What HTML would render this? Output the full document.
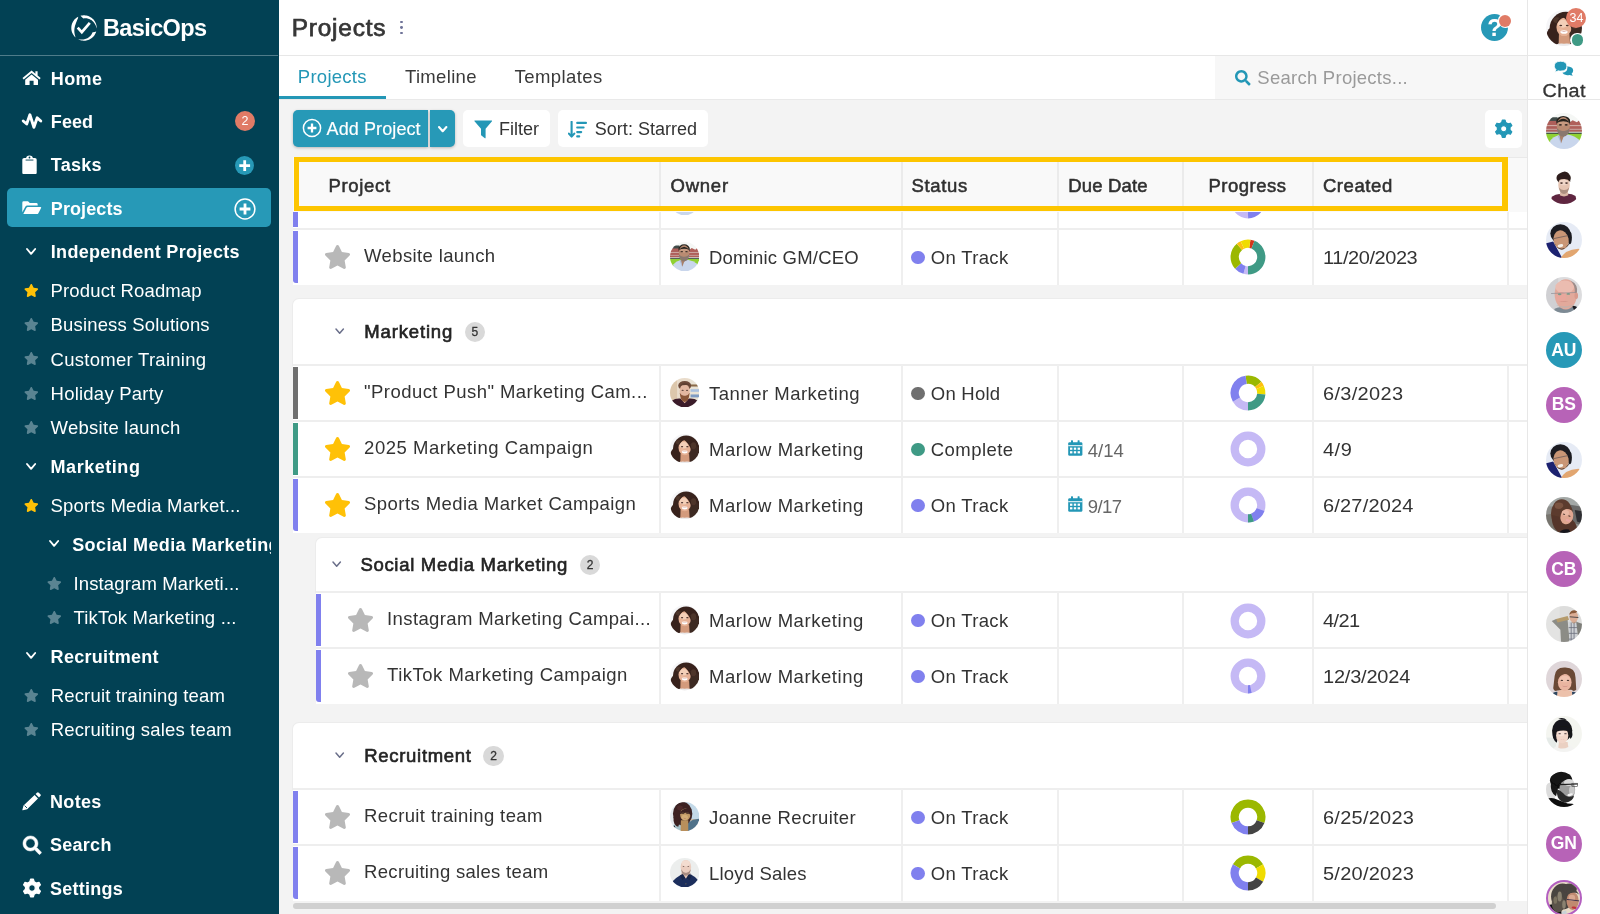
<!DOCTYPE html>
<html><head><meta charset="utf-8"><title>Projects - BasicOps</title>
<style>
html,body{margin:0;padding:0;background:#f3f3f3;}
#app{position:relative;width:1600px;height:914px;overflow:hidden;font-family:"Liberation Sans", sans-serif;}
#app div,#app svg,#app span{position:absolute;}
#app span{white-space:nowrap;line-height:1em;display:block;}
#app{will-change:transform;}
</style></head><body><div id="app">
<div style="left:0px;top:0px;width:1600px;height:914px;background:#f3f3f3;"></div>
<div style="left:279px;top:0px;width:1249px;height:56px;background:#fff;"></div>
<div style="left:279px;top:55px;width:1249px;height:1px;background:#e7e7e7;"></div>
<div style="left:279px;top:56px;width:936px;height:43px;background:#fff;"></div>
<div style="left:1215px;top:56px;width:313px;height:43px;background:#f7f7f7;"></div>
<div style="left:279px;top:99px;width:1249px;height:1px;background:#e9e9e9;"></div>
<div style="left:279px;top:96px;width:107px;height:3px;background:#2397b6;"></div>
<div style="left:1528px;top:0px;width:72px;height:914px;background:#fff;"></div>
<div style="left:1527px;top:0px;width:1px;height:914px;background:#e7e7e7;"></div>
<div style="left:1528px;top:55px;width:72px;height:1px;background:#e7e7e7;"></div>
<div style="left:1528px;top:99px;width:72px;height:1px;background:#e7e7e7;"></div>
<div style="left:0px;top:0px;width:279px;height:914px;background:#024154;"></div>
<div style="left:0px;top:55px;width:278px;height:1px;background:#4f7c8a;"></div>
<svg style="left:69.5px;top:14.0px;" width="28" height="28" viewBox="-14 -14 28 28"><path d="M-5.77 -11.32 L-6.66 -10.81 L-7.51 -10.24 L-8.31 -9.60 L-9.06 -8.90 L-9.75 -8.14 L-10.37 -7.33 L-10.93 -6.47 L-11.41 -5.57 L-11.83 -4.63 L-12.16 -3.66 L-12.42 -2.67 L-12.59 -1.66 L-12.68 -0.64 L-12.69 0.39 L-12.62 1.41 L-12.47 2.42 L-12.23 3.42 L-11.92 4.40 L-11.52 5.34 L-11.05 6.25 L-10.51 7.12 L-9.90 7.95 L-9.23 8.72 L-8.50 9.44 L-8.50 9.44 L-8.76 8.28 L-9.06 7.27 L-9.30 6.30 L-9.48 5.36 L-9.60 4.45 L-9.67 3.57 L-9.69 2.71 L-9.66 1.88 L-9.59 1.07 L-9.48 0.29 L-9.35 -0.47 L-9.19 -1.21 L-9.01 -1.94 L-8.81 -2.65 L-8.59 -3.36 L-8.35 -4.07 L-8.10 -4.79 L-7.82 -5.52 L-7.52 -6.28 L-7.19 -7.06 L-6.83 -7.89 L-6.44 -8.78 L-6.02 -9.78 L-5.77 -11.32Z" fill="#fff"/><path d="M-3.50 -12.21 L-2.53 -12.45 L-1.55 -12.61 L-0.55 -12.69 L0.44 -12.69 L1.44 -12.62 L2.42 -12.47 L3.39 -12.24 L4.34 -11.93 L5.27 -11.56 L6.16 -11.11 L7.01 -10.59 L7.82 -10.01 L8.58 -9.36 L9.29 -8.66 L9.94 -7.91 L10.53 -7.10 L11.05 -6.25 L11.51 -5.37 L11.90 -4.45 L12.21 -3.50 L12.45 -2.53 L12.61 -1.55 L12.69 -0.55 L12.69 0.44 L12.69 0.44 L12.37 -0.54 L12.07 -1.48 L11.72 -2.39 L11.33 -3.25 L10.88 -4.07 L10.39 -4.84 L9.84 -5.57 L9.26 -6.24 L8.63 -6.86 L7.96 -7.42 L7.26 -7.93 L6.54 -8.37 L5.79 -8.75 L5.02 -9.06 L4.25 -9.32 L3.46 -9.51 L2.67 -9.63 L1.89 -9.70 L1.11 -9.70 L0.34 -9.64 L-0.42 -9.52 L-1.21 -9.89 L-2.25 -11.06 L-3.50 -12.21Z" fill="#fff"/><path d="M12.21 3.50 L11.92 4.40 L11.56 5.27 L11.13 6.11 L10.65 6.92 L10.11 7.69 L9.51 8.42 L8.86 9.10 L8.16 9.73 L7.42 10.31 L6.64 10.83 L5.81 11.29 L4.96 11.69 L4.08 12.03 L3.18 12.30 L2.26 12.50 L1.33 12.63 L0.39 12.69 L-0.55 12.69 L-1.49 12.61 L-2.42 12.47 L-3.34 12.25 L-4.24 11.97 L-5.11 11.62 L-5.96 11.21 L-5.96 11.21 L-4.98 11.33 L-4.06 11.46 L-3.15 11.54 L-2.25 11.57 L-1.37 11.54 L-0.50 11.45 L0.35 11.31 L1.17 11.10 L1.96 10.85 L2.73 10.54 L3.46 10.18 L4.15 9.77 L4.80 9.33 L5.42 8.84 L5.98 8.31 L6.50 7.75 L6.98 7.16 L7.40 6.55 L7.77 5.91 L8.09 5.25 L8.36 4.59 L9.07 4.13 L10.59 3.91 L12.21 3.50Z" fill="#fff"/><path d="M-6.3 -0.3 L-2.2 4.2 L5.8 -5.1" fill="none" stroke="#fff" stroke-width="2.7" stroke-linecap="butt" stroke-linejoin="miter"/></svg>
<span id="t0" style="top:16.91px;font-size:23.5px;color:#fff;font-weight:700;letter-spacing:-0.617px;left:103.00px;">BasicOps</span>
<div style="left:7px;top:188px;width:264px;height:39px;background:#2799b7;border-radius:5px;"></div>
<svg style="left:22.4px;top:69.8px;" width="19.2" height="15.4" viewBox="0 0 19.2 15.4"><path d="M9.6 0.6 L0.5 8.1 L1.7 9.5 L9.6 3.0 L17.5 9.5 L18.7 8.1 L15.6 5.55 L15.6 1.2 L13.4 1.2 L13.4 3.75 Z" fill="#fff"/><path d="M9.6 4.5 L3.2 9.8 L3.2 14.6 Q3.2 15.2 3.8 15.2 L7.6 15.2 L7.6 10.8 L11.6 10.8 L11.6 15.2 L15.4 15.2 Q16 15.2 16 14.6 L16 9.8 Z" fill="#fff"/></svg>
<span id="t1" style="top:69.66px;font-size:18px;color:#fff;font-weight:700;letter-spacing:0.361px;left:50.80px;">Home</span>
<svg style="left:20px;top:110px;" width="24" height="22" viewBox="20 110 24 22"><path d="M23.2 121 L26.7 124.0 L29.9 114.8 L33.9 127.3 L37.2 117.8 L40.8 121" fill="none" stroke="#fff" stroke-width="2.9" stroke-linecap="round" stroke-linejoin="round"/></svg>
<span id="t2" style="top:112.66px;font-size:18px;color:#fff;font-weight:700;letter-spacing:0.095px;left:50.80px;">Feed</span>
<div style="left:235px;top:110.8px;width:20px;height:20px;background:#e07b66;border-radius:50%;"></div>
<span id="t3" style="top:114.52px;font-size:12.5px;color:#fff;left:45.00px;width:400px;text-align:center;">2</span>
<svg style="left:22.3px;top:154.8px;" width="15" height="19.6" viewBox="0 0 15 19.6"><rect x="0.3" y="2.9" width="14.4" height="16.4" rx="1.8" fill="#fff"/><path d="M4.2 2.9 Q4.2 0.4 7.5 0.4 Q10.8 0.4 10.8 2.9 L11.6 2.9 L11.6 5.2 L3.4 5.2 L3.4 2.9Z" fill="#fff"/><rect x="3.6" y="4.6" width="7.8" height="0.9" fill="#024154"/><circle cx="7.5" cy="2.5" r="0.9" fill="#024154"/></svg>
<span id="t4" style="top:156.16px;font-size:18px;color:#fff;font-weight:700;letter-spacing:0.249px;left:50.80px;">Tasks</span>
<div style="left:235px;top:156px;width:19.4px;height:19.4px;background:#2799b7;border-radius:50%;"></div>
<svg style="left:235px;top:156px;" width="19.4" height="19.4" viewBox="0 0 19.4 19.4"><path d="M9.7 4.3 V15.1 M4.3 9.7 H15.1" stroke="#fff" stroke-width="2.8" fill="none"/></svg>
<svg style="left:22px;top:201.3px;" width="19.6" height="13.4" viewBox="0 0 19.6 13.4"><path d="M0.3 11.2 L0.3 1.7 Q0.3 0.3 1.7 0.3 L6.0 0.3 L7.8 2.1 L14.3 2.1 Q15.7 2.1 15.7 3.5 L15.7 4.6 L5.3 4.6 Q4.0 4.6 3.3 5.8 Z" fill="#fff"/><path d="M1.3 13.1 L4.4 6.9 Q4.9 6.0 5.9 6.0 L18.5 6.0 Q19.6 6.0 19.1 7.0 L16.4 12.2 Q15.9 13.1 14.9 13.1 Z" fill="#fff"/></svg>
<span id="t5" style="top:199.56px;font-size:18px;color:#fff;font-weight:700;letter-spacing:0.093px;left:50.80px;">Projects</span>
<svg style="left:233.5px;top:197.9px;" width="22" height="22" viewBox="0 0 22 22"><circle cx="11" cy="11" r="9.9" fill="none" stroke="#fff" stroke-width="1.5"/><path d="M11 5.6 V16.4 M5.6 11 H16.4" stroke="#fff" stroke-width="2.8" fill="none"/></svg>
<svg style="left:25.4px;top:247.4px;" width="12.2" height="8.8" viewBox="-2 -2 12.2 8.8"><path d="M0 0 L4.1 4.8 L8.2 0" fill="none" stroke="#fff" stroke-width="1.9" stroke-linecap="round" stroke-linejoin="round"/></svg>
<span id="t6" style="top:242.96px;font-size:18px;color:#fff;font-weight:700;letter-spacing:0.298px;left:50.80px;">Independent Projects</span>
<svg style="left:24.1px;top:283.91px;" width="14.6" height="12.98" viewBox="0 0 576 512"><path fill="#ffc107" d="M259.3 17.8L194 150.2 47.9 171.5c-26.2 3.8-36.7 36.1-17.700 54.600l105.700 103-25 145.500c-4.500 26.300 23.200 46 46.400 33.700L288 439.600l130.700 68.700c23.200 12.200 50.900-7.400 46.400-33.700l-25-145.500 105.700-103c19-18.500 8.500-50.800-17.700-54.600L382 150.200 316.700 17.800c-11.700-23.600-45.600-23.900-57.400 0z"/></svg>
<span id="t7" style="top:282.24px;font-size:18.5px;color:#fff;letter-spacing:0.134px;left:50.60px;">Product Roadmap</span>
<svg style="left:24.1px;top:318.11px;" width="14.6" height="12.98" viewBox="0 0 576 512"><path fill="#5a8492" d="M259.3 17.8L194 150.2 47.9 171.5c-26.2 3.8-36.7 36.1-17.700 54.600l105.700 103-25 145.500c-4.500 26.300 23.200 46 46.400 33.700L288 439.600l130.700 68.700c23.200 12.200 50.900-7.400 46.400-33.700l-25-145.500 105.700-103c19-18.500 8.500-50.800-17.700-54.600L382 150.200 316.700 17.800c-11.700-23.600-45.600-23.900-57.400 0z"/></svg>
<span id="t8" style="top:316.44px;font-size:18.5px;color:#fff;letter-spacing:0.158px;left:50.60px;">Business Solutions</span>
<svg style="left:24.1px;top:352.31px;" width="14.6" height="12.98" viewBox="0 0 576 512"><path fill="#5a8492" d="M259.3 17.8L194 150.2 47.9 171.5c-26.2 3.8-36.7 36.1-17.700 54.600l105.700 103-25 145.500c-4.500 26.300 23.200 46 46.400 33.700L288 439.600l130.700 68.700c23.200 12.200 50.900-7.400 46.400-33.700l-25-145.500 105.700-103c19-18.500 8.500-50.800-17.700-54.600L382 150.200 316.700 17.800c-11.700-23.600-45.600-23.900-57.400 0z"/></svg>
<span id="t9" style="top:350.64px;font-size:18.5px;color:#fff;letter-spacing:0.271px;left:50.60px;">Customer Training</span>
<svg style="left:24.1px;top:386.61px;" width="14.6" height="12.98" viewBox="0 0 576 512"><path fill="#5a8492" d="M259.3 17.8L194 150.2 47.9 171.5c-26.2 3.8-36.7 36.1-17.700 54.600l105.700 103-25 145.500c-4.500 26.300 23.200 46 46.400 33.700L288 439.600l130.700 68.700c23.200 12.200 50.900-7.400 46.400-33.700l-25-145.500 105.700-103c19-18.500 8.500-50.800-17.700-54.600L382 150.200 316.700 17.800c-11.700-23.600-45.600-23.900-57.400 0z"/></svg>
<span id="t10" style="top:384.94px;font-size:18.5px;color:#fff;letter-spacing:0.224px;left:50.60px;">Holiday Party</span>
<svg style="left:24.1px;top:420.81px;" width="14.6" height="12.98" viewBox="0 0 576 512"><path fill="#5a8492" d="M259.3 17.8L194 150.2 47.9 171.5c-26.2 3.8-36.7 36.1-17.700 54.600l105.700 103-25 145.500c-4.500 26.300 23.200 46 46.400 33.700L288 439.600l130.700 68.700c23.200 12.200 50.900-7.400 46.400-33.700l-25-145.500 105.700-103c19-18.500 8.500-50.800-17.700-54.600L382 150.200 316.700 17.800c-11.700-23.600-45.600-23.900-57.400 0z"/></svg>
<span id="t11" style="top:419.14px;font-size:18.5px;color:#fff;letter-spacing:0.265px;left:50.60px;">Website launch</span>
<svg style="left:25.4px;top:462.0px;" width="12.2" height="8.8" viewBox="-2 -2 12.2 8.8"><path d="M0 0 L4.1 4.8 L8.2 0" fill="none" stroke="#fff" stroke-width="1.9" stroke-linecap="round" stroke-linejoin="round"/></svg>
<span id="t12" style="top:458.16px;font-size:18px;color:#fff;font-weight:700;letter-spacing:0.534px;left:50.60px;">Marketing</span>
<svg style="left:24.1px;top:498.71px;" width="14.6" height="12.98" viewBox="0 0 576 512"><path fill="#ffc107" d="M259.3 17.8L194 150.2 47.9 171.5c-26.2 3.8-36.7 36.1-17.700 54.600l105.700 103-25 145.500c-4.500 26.300 23.200 46 46.400 33.700L288 439.600l130.700 68.700c23.200 12.200 50.900-7.400 46.400-33.700l-25-145.500 105.700-103c19-18.500 8.500-50.800-17.700-54.600L382 150.200 316.700 17.800c-11.700-23.600-45.600-23.900-57.400 0z"/></svg>
<span id="t13" style="top:496.94px;font-size:18.5px;color:#fff;letter-spacing:0.181px;left:50.60px;">Sports Media Market...</span>
<svg style="left:47.6px;top:539.2px;" width="12.2" height="8.8" viewBox="-2 -2 12.2 8.8"><path d="M0 0 L4.1 4.8 L8.2 0" fill="none" stroke="#fff" stroke-width="1.9" stroke-linecap="round" stroke-linejoin="round"/></svg>
<span id="t14" style="top:535.56px;font-size:18px;color:#fff;font-weight:700;letter-spacing:0.397px;left:72.20px;max-width:198.6px;overflow:hidden;">Social Media Marketing</span>
<svg style="left:47.1px;top:576.81px;" width="14.6" height="12.98" viewBox="0 0 576 512"><path fill="#5a8492" d="M259.3 17.8L194 150.2 47.9 171.5c-26.2 3.8-36.7 36.1-17.700 54.600l105.700 103-25 145.500c-4.500 26.300 23.200 46 46.400 33.700L288 439.600l130.700 68.700c23.200 12.200 50.900-7.400 46.400-33.700l-25-145.500 105.700-103c19-18.500 8.500-50.800-17.700-54.600L382 150.200 316.700 17.800c-11.700-23.600-45.600-23.900-57.400 0z"/></svg>
<span id="t15" style="top:575.04px;font-size:18.5px;color:#fff;letter-spacing:0.133px;left:73.50px;">Instagram Marketi...</span>
<svg style="left:47.1px;top:611.01px;" width="14.6" height="12.98" viewBox="0 0 576 512"><path fill="#5a8492" d="M259.3 17.8L194 150.2 47.9 171.5c-26.2 3.8-36.7 36.1-17.700 54.600l105.700 103-25 145.500c-4.500 26.300 23.200 46 46.400 33.700L288 439.600l130.700 68.700c23.200 12.200 50.900-7.400 46.400-33.700l-25-145.500 105.700-103c19-18.500 8.500-50.800-17.700-54.600L382 150.200 316.700 17.800c-11.700-23.600-45.600-23.900-57.400 0z"/></svg>
<span id="t16" style="top:609.34px;font-size:18.5px;color:#fff;letter-spacing:0.168px;left:73.50px;">TikTok Marketing ...</span>
<svg style="left:25.4px;top:651.2px;" width="12.2" height="8.8" viewBox="-2 -2 12.2 8.8"><path d="M0 0 L4.1 4.8 L8.2 0" fill="none" stroke="#fff" stroke-width="1.9" stroke-linecap="round" stroke-linejoin="round"/></svg>
<span id="t17" style="top:647.96px;font-size:18px;color:#fff;font-weight:700;letter-spacing:0.297px;left:50.60px;">Recruitment</span>
<svg style="left:24.0px;top:688.81px;" width="14.6" height="12.98" viewBox="0 0 576 512"><path fill="#5a8492" d="M259.3 17.8L194 150.2 47.9 171.5c-26.2 3.8-36.7 36.1-17.700 54.600l105.700 103-25 145.500c-4.500 26.300 23.200 46 46.400 33.700L288 439.600l130.700 68.700c23.200 12.200 50.900-7.400 46.400-33.700l-25-145.500 105.700-103c19-18.500 8.500-50.800-17.700-54.600L382 150.200 316.700 17.800c-11.700-23.600-45.600-23.900-57.400 0z"/></svg>
<span id="t18" style="top:686.94px;font-size:18.5px;color:#fff;letter-spacing:0.171px;left:50.70px;">Recruit training team</span>
<svg style="left:24.0px;top:722.71px;" width="14.6" height="12.98" viewBox="0 0 576 512"><path fill="#5a8492" d="M259.3 17.8L194 150.2 47.9 171.5c-26.2 3.8-36.7 36.1-17.700 54.600l105.700 103-25 145.500c-4.500 26.300 23.200 46 46.400 33.700L288 439.600l130.700 68.700c23.200 12.200 50.900-7.400 46.400-33.700l-25-145.500 105.700-103c19-18.500 8.500-50.800-17.700-54.600L382 150.200 316.700 17.800c-11.700-23.600-45.600-23.900-57.400 0z"/></svg>
<span id="t19" style="top:720.94px;font-size:18.5px;color:#fff;letter-spacing:0.160px;left:50.70px;">Recruiting sales team</span>
<svg style="left:22.4px;top:792px;" width="19.2" height="18.6" viewBox="0 0 19.2 18.6"><path d="M13.6 2.0 L15.0 0.7 Q15.9 -0.1 16.8 0.7 L18.4 2.3 Q19.2 3.2 18.4 4.1 L17.0 5.4 Z" fill="#fff"/><path d="M12.6 3.0 L16.0 6.4 L5.2 17.2 L0.9 18.3 Q0.2 18.4 0.4 17.7 L1.5 13.5 Z" fill="#fff"/><path d="M2.6 13.6 L5.0 16.0" stroke="#024154" stroke-width="0.9" fill="none"/></svg>
<span id="t20" style="top:792.86px;font-size:18px;color:#fff;font-weight:700;letter-spacing:0.321px;left:50.00px;">Notes</span>
<svg style="left:22.7px;top:836.0px;overflow:visible;" width="18.4" height="18.4" viewBox="0 0 512 512"><path fill="#fff" stroke="#fff" stroke-width="14" stroke-linejoin="round" d="M505 442.7L405.3 343c-4.5-4.5-10.6-7-17-7H372c27.6-35.3 44-79.7 44-128C416 93.1 322.9 0 208 0S0 93.1 0 208s93.1 208 208 208c48.3 0 92.7-16.4 128-44v16.3c0 6.4 2.5 12.5 7 17l99.7 99.7c9.4 9.4 24.6 9.4 33.9 0l28.3-28.3c9.4-9.4 9.4-24.6.1-34zM208 336c-70.7 0-128-57.2-128-128 0-70.7 57.2-128 128-128 70.7 0 128 57.2 128 128 0 70.7-57.2 128-128 128z"/></svg>
<span id="t21" style="top:836.36px;font-size:18px;color:#fff;font-weight:700;letter-spacing:0.271px;left:50.00px;">Search</span>
<svg style="left:22.0px;top:877.8px;" width="20.0" height="20.0" viewBox="-10.0 -10.0 20.0 20.0"><path d="M-2.16 -6.30 L-1.42 -8.89 L1.42 -8.89 L2.16 -6.30 L4.38 -5.02 L6.99 -5.67 L8.41 -3.21 L6.54 -1.28 L6.54 1.28 L8.41 3.21 L6.99 5.67 L4.38 5.02 L2.16 6.30 L1.42 8.89 L-1.42 8.89 L-2.16 6.30 L-4.38 5.02 L-6.99 5.67 L-8.41 3.21 L-6.54 1.28 L-6.54 -1.28 L-8.41 -3.21 L-6.99 -5.67 L-4.38 -5.02Z M3.2399999999999998 0 A3.2399999999999998 3.2399999999999998 0 1 0 -3.2399999999999998 0 A3.2399999999999998 3.2399999999999998 0 1 0 3.2399999999999998 0Z" fill="#fff" fill-rule="evenodd" stroke="#fff" stroke-width="1.2" stroke-linejoin="round"/></svg>
<span id="t22" style="top:879.86px;font-size:18px;color:#fff;font-weight:700;letter-spacing:0.241px;left:50.00px;">Settings</span>
<span id="t23" style="top:15.85px;font-size:24.4px;color:#363636;letter-spacing:0.784px;left:291.80px;-webkit-text-stroke:0.75px #363636;">Projects</span>
<div style="left:400.1px;top:20.6px;width:2.9px;height:2.9px;background:#6f7398;border-radius:50%;"></div>
<div style="left:400.1px;top:26.1px;width:2.9px;height:2.9px;background:#6f7398;border-radius:50%;"></div>
<div style="left:400.1px;top:31.6px;width:2.9px;height:2.9px;background:#6f7398;border-radius:50%;"></div>
<div style="left:1481px;top:13.8px;width:27.4px;height:27.4px;background:#2799b7;border-radius:50%;"></div>
<span id="t24" style="top:16.28px;font-size:24px;color:#fff;font-weight:700;left:1294.60px;width:400px;text-align:center;">?</span>
<div style="left:1497.5px;top:13.4px;width:15px;height:15px;background:#fff;border-radius:50%;"></div>
<div style="left:1499px;top:14.9px;width:12px;height:12px;background:#e07b66;border-radius:50%;"></div>
<span id="t25" style="top:67.94px;font-size:18.5px;color:#2397b6;letter-spacing:0.267px;left:297.80px;">Projects</span>
<span id="t26" style="top:67.94px;font-size:18.5px;color:#3a3a3a;letter-spacing:0.324px;left:405.00px;">Timeline</span>
<span id="t27" style="top:67.94px;font-size:18.5px;color:#3a3a3a;letter-spacing:0.421px;left:514.50px;">Templates</span>
<svg style="left:1234.6px;top:70.2px;overflow:visible;" width="15.6" height="15.6" viewBox="0 0 512 512"><path fill="#2397b6" stroke="#2397b6" stroke-width="0" stroke-linejoin="round" d="M505 442.7L405.3 343c-4.5-4.5-10.6-7-17-7H372c27.6-35.3 44-79.7 44-128C416 93.1 322.9 0 208 0S0 93.1 0 208s93.1 208 208 208c48.3 0 92.7-16.4 128-44v16.3c0 6.4 2.5 12.5 7 17l99.7 99.7c9.4 9.4 24.6 9.4 33.9 0l28.3-28.3c9.4-9.4 9.4-24.6.1-34zM208 336c-70.7 0-128-57.2-128-128 0-70.7 57.2-128 128-128 70.7 0 128 57.2 128 128 0 70.7-57.2 128-128 128z"/></svg>
<span id="t28" style="top:68.84px;font-size:18.5px;color:#9a9a9a;letter-spacing:0.258px;left:1257.30px;">Search Projects...</span>
<div style="left:293px;top:110.2px;width:135.0px;height:36.5px;background:#2799b7;border-radius:5px 0 0 5px;box-shadow:0 1px 3px rgba(0,0,0,.25);"></div>
<div style="left:430.0px;top:110.2px;width:25.3px;height:36.5px;background:#2799b7;border-radius:0 5px 5px 0;box-shadow:0 1px 3px rgba(0,0,0,.25);"></div>
<svg style="left:302px;top:118.4px;" width="20" height="20" viewBox="0 0 20 20"><circle cx="10" cy="10" r="8.6" fill="none" stroke="#fff" stroke-width="1.5"/><path d="M10 5.6 V14.4 M5.6 10 H14.4" stroke="#fff" stroke-width="2.3" fill="none"/></svg>
<span id="t29" style="top:119.65px;font-size:18.01px;color:#fff;letter-spacing:0.094px;left:326.60px;-webkit-text-stroke:0.15px #fff;">Add Project</span>
<svg style="left:437.3px;top:124.80000000000001px;" width="11.4" height="8.2" viewBox="-2 -2 11.4 8.2"><path d="M0 0 L3.7 4.2 L7.4 0" fill="none" stroke="#fff" stroke-width="2.1" stroke-linecap="round" stroke-linejoin="round"/></svg>
<div style="left:463.2px;top:110.2px;width:86.5px;height:36.5px;background:#fff;border-radius:5px;"></div>
<svg style="left:473.6px;top:119.8px;" width="18.6" height="18.8" viewBox="0 0 18.6 18.8"><path d="M0.9 0.4 L17.7 0.4 Q18.6 0.4 18.1 1.2 L11.6 8.8 L11.6 17.8 Q11.6 18.7 10.9 18.2 L7.4 15.6 Q7.0 15.3 7.0 14.8 L7.0 8.8 L0.5 1.2 Q0 0.4 0.9 0.4Z" fill="#2397b6"/></svg>
<span id="t30" style="top:119.65px;font-size:18.01px;color:#333;left:499.00px;">Filter</span>
<div style="left:557.8px;top:110.2px;width:150.4px;height:36.5px;background:#fff;border-radius:5px;"></div>
<svg style="left:568.4px;top:120.6px;" width="19" height="17" viewBox="0 0 19 17"><path d="M3.6 0.8 V15.4 M0.9 12.6 L3.6 15.6 L6.3 12.6" fill="none" stroke="#2397b6" stroke-width="2.1" stroke-linecap="round" stroke-linejoin="round"/><path d="M9.2 1.9 H18 M9.2 6.5 H15.6 M9.2 11.1 H13.2 M9.2 15.4 H11.2" fill="none" stroke="#2397b6" stroke-width="2.1" stroke-linecap="round"/></svg>
<span id="t31" style="top:119.65px;font-size:18.01px;color:#333;letter-spacing:0.021px;left:594.80px;">Sort: Starred</span>
<div style="left:1484.5px;top:110px;width:37.7px;height:37.7px;background:#fff;border-radius:5px;"></div>
<svg style="left:1493.5px;top:118.8px;" width="19.4" height="19.4" viewBox="-9.7 -9.7 19.4 19.4"><path d="M-2.09 -6.09 L-1.37 -8.59 L1.37 -8.59 L2.09 -6.09 L4.23 -4.85 L6.75 -5.48 L8.13 -3.11 L6.32 -1.24 L6.32 1.24 L8.13 3.11 L6.75 5.48 L4.23 4.85 L2.09 6.09 L1.37 8.59 L-1.37 8.59 L-2.09 6.09 L-4.23 4.85 L-6.75 5.48 L-8.13 3.11 L-6.32 1.24 L-6.32 -1.24 L-8.13 -3.11 L-6.75 -5.48 L-4.23 -4.85Z M3.1319999999999997 0 A3.1319999999999997 3.1319999999999997 0 1 0 -3.1319999999999997 0 A3.1319999999999997 3.1319999999999997 0 1 0 3.1319999999999997 0Z" fill="#2397b6" fill-rule="evenodd" stroke="#2397b6" stroke-width="1.2" stroke-linejoin="round"/></svg>
<div style="left:293px;top:157px;width:1234px;height:54px;background:#f9f9f9;"></div>
<div style="left:293px;top:211px;width:1234px;height:1px;background:#e7e7e7;"></div>
<div style="left:293px;top:173px;width:1234px;height:56px;background:#fff;"></div>
<div style="left:293px;top:172px;width:1234px;height:2px;background:#eeeeee;"></div>
<div style="left:659px;top:173px;width:2px;height:56px;background:#efefef;"></div>
<div style="left:900.5px;top:173px;width:2px;height:56px;background:#efefef;"></div>
<div style="left:1057px;top:173px;width:2px;height:56px;background:#efefef;"></div>
<div style="left:1181.8px;top:173px;width:2px;height:56px;background:#efefef;"></div>
<div style="left:1311.8px;top:173px;width:2px;height:56px;background:#efefef;"></div>
<div style="left:1507px;top:173px;width:2px;height:56px;background:#efefef;"></div>
<div style="left:292.7px;top:175px;width:5.4px;height:52px;background:#8080ee;"></div>
<svg style="left:324.4px;top:187.9px;" width="27" height="24.0" viewBox="0 0 576 512"><path fill="#b8b8b8" d="M259.3 17.8L194 150.2 47.9 171.5c-26.2 3.8-36.7 36.1-17.700 54.600l105.700 103-25 145.500c-4.500 26.300 23.200 46 46.400 33.700L288 439.600l130.700 68.700c23.200 12.200 50.900-7.400 46.400-33.700l-25-145.500 105.700-103c19-18.500 8.500-50.800-17.700-54.600L382 150.200 316.700 17.800c-11.700-23.600-45.600-23.900-57.400 0z"/></svg>

<svg style="left:669.60px;top:186.10px" width="29.40" height="29.40" viewBox="-50 -50 100 100"><defs><clipPath id="c1"><circle r="50"/></clipPath><filter id="f1" x="-20%" y="-20%" width="140%" height="140%"><feGaussianBlur stdDeviation="1.9"/></filter></defs><g clip-path="url(#c1)"><g filter="url(#f1)"><rect x="-60" y="-60" width="120" height="120" fill="#f5f7f5"/><path d="M-50 -26 L-40 -38 L-18 -38 L-16 -26Z" fill="#3f4c4a"/><rect x="-52" y="-28" width="40" height="32" fill="#ae5f5a"/><path d="M14 -22 L24 -30 L36 -24 L42 -30 L54 -22 L54 4 L14 4Z" fill="#b0605a"/><rect x="-52" y="-16" width="104" height="2.4" fill="#d9c2bc"/><rect x="-52" y="-6" width="104" height="2.4" fill="#cfb2ac"/><rect x="-52" y="2" width="104" height="5" fill="#cfd2cf"/><rect x="-52" y="5" width="104" height="4" fill="#3c4c40"/><rect x="-52" y="8" width="104" height="46" fill="#8fd030"/><path d="M-42 54 L-38 26 Q-30 16 -16 12 L10 10 Q30 14 42 24 L48 54Z" fill="#c9d6ec"/><path d="M-14 12 L-8 34 L-2 18 L4 10Z" fill="#a8806a"/><path d="M-18 12 L-8 36 L-12 14Z" fill="#aab9d6"/><ellipse cx="-2" cy="-26" rx="19.5" ry="16" fill="#25231f" /><ellipse cx="-2" cy="-13" rx="18" ry="26" fill="#b98b72" /><ellipse cx="-3" cy="-22" rx="13" ry="9" fill="#c79a80" /><path d="M-20 -8 Q-18 16 -2 16 Q14 16 16 -8 Q8 2 -2 0 Q-12 2 -20 -8Z" fill="#8a786e"/><path d="M-21 -22 Q-2 -46 17 -22 Q-2 -32 -21 -22Z" fill="#25231f"/><ellipse cx="-10" cy="-17" rx="4.4" ry="2.2" fill="#3a2c26" /><ellipse cx="6" cy="-17" rx="4.4" ry="2.2" fill="#3a2c26" /></g></g></svg>

<div style="left:911px;top:194.6px;width:13.6px;height:13.6px;background:#8080ee;border-radius:50%;"></div>

<svg style="left:1229.5px;top:183.3px;" width="36" height="36" viewBox="-18 -18 36 36"><path d="M0.00 -13.32 A13.325 13.325 0 0 1 0.00 13.32" fill="none" stroke="#8080ee" stroke-width="8.25"/><path d="M0.00 13.32 A13.325 13.325 0 0 1 -0.00 -13.32" fill="none" stroke="#c5b9f5" stroke-width="8.25"/></svg>

<div style="left:293px;top:157px;width:1234px;height:54.5px;background:#f9f9f9;"></div>
<div style="left:659px;top:162px;width:2px;height:44px;background:#ebebeb;"></div>
<div style="left:900.5px;top:162px;width:2px;height:44px;background:#ebebeb;"></div>
<div style="left:1057px;top:162px;width:2px;height:44px;background:#ebebeb;"></div>
<div style="left:1181.8px;top:162px;width:2px;height:44px;background:#ebebeb;"></div>
<div style="left:1311.8px;top:162px;width:2px;height:44px;background:#ebebeb;"></div>
<div style="left:293.6px;top:156.5px;width:1214px;height:54.7px;background:transparent;border-style:solid;border-color:#fdc500;border-width:5.4px 6px 5.4px 5.7px;box-sizing:border-box;"></div>
<div style="left:1507.6px;top:157px;width:19.4px;height:1px;background:#e9e9e9;"></div>
<span id="t36" style="top:176.74px;font-size:18.5px;color:#303030;letter-spacing:0.670px;left:328.50px;-webkit-text-stroke:0.55px #303030;">Project</span>
<span id="t37" style="top:176.74px;font-size:18.5px;color:#303030;letter-spacing:0.775px;left:670.50px;-webkit-text-stroke:0.55px #303030;">Owner</span>
<span id="t38" style="top:176.74px;font-size:18.5px;color:#303030;letter-spacing:0.629px;left:911.60px;-webkit-text-stroke:0.55px #303030;">Status</span>
<span id="t39" style="top:176.74px;font-size:18.5px;color:#303030;letter-spacing:0.163px;left:1068.20px;-webkit-text-stroke:0.55px #303030;">Due Date</span>
<span id="t40" style="top:176.74px;font-size:18.5px;color:#303030;letter-spacing:0.510px;left:1047.30px;width:400px;text-align:center;text-indent:0.510px;-webkit-text-stroke:0.55px #303030;">Progress</span>
<span id="t41" style="top:176.74px;font-size:18.5px;color:#303030;letter-spacing:0.579px;left:1322.90px;-webkit-text-stroke:0.55px #303030;">Created</span>
<div style="left:293px;top:229px;width:1234px;height:56px;background:#fff;"></div>
<div style="left:293px;top:228px;width:1234px;height:2px;background:#eeeeee;"></div>
<div style="left:659px;top:229px;width:2px;height:56px;background:#efefef;"></div>
<div style="left:900.5px;top:229px;width:2px;height:56px;background:#efefef;"></div>
<div style="left:1057px;top:229px;width:2px;height:56px;background:#efefef;"></div>
<div style="left:1181.8px;top:229px;width:2px;height:56px;background:#efefef;"></div>
<div style="left:1311.8px;top:229px;width:2px;height:56px;background:#efefef;"></div>
<div style="left:1507px;top:229px;width:2px;height:56px;background:#efefef;"></div>
<div style="left:292.7px;top:231px;width:5.4px;height:52px;background:#8080ee;border-radius:0 0 0 3px;"></div>
<svg style="left:324.4px;top:245.1px;" width="27" height="24.0" viewBox="0 0 576 512"><path fill="#b8b8b8" d="M259.3 17.8L194 150.2 47.9 171.5c-26.2 3.8-36.7 36.1-17.700 54.600l105.700 103-25 145.500c-4.500 26.300 23.200 46 46.400 33.700L288 439.600l130.700 68.700c23.200 12.200 50.900-7.400 46.400-33.700l-25-145.500 105.700-103c19-18.500 8.500-50.800-17.700-54.600L382 150.200 316.700 17.800c-11.700-23.600-45.600-23.900-57.400 0z"/></svg>
<span id="t42" style="top:246.64px;font-size:18.5px;color:#333333;letter-spacing:0.373px;left:364.10px;">Website launch</span>
<svg style="left:669.60px;top:242.10px" width="29.40" height="29.40" viewBox="-50 -50 100 100"><defs><clipPath id="c2"><circle r="50"/></clipPath><filter id="f2" x="-20%" y="-20%" width="140%" height="140%"><feGaussianBlur stdDeviation="1.9"/></filter></defs><g clip-path="url(#c2)"><g filter="url(#f2)"><rect x="-60" y="-60" width="120" height="120" fill="#f5f7f5"/><path d="M-50 -26 L-40 -38 L-18 -38 L-16 -26Z" fill="#3f4c4a"/><rect x="-52" y="-28" width="40" height="32" fill="#ae5f5a"/><path d="M14 -22 L24 -30 L36 -24 L42 -30 L54 -22 L54 4 L14 4Z" fill="#b0605a"/><rect x="-52" y="-16" width="104" height="2.4" fill="#d9c2bc"/><rect x="-52" y="-6" width="104" height="2.4" fill="#cfb2ac"/><rect x="-52" y="2" width="104" height="5" fill="#cfd2cf"/><rect x="-52" y="5" width="104" height="4" fill="#3c4c40"/><rect x="-52" y="8" width="104" height="46" fill="#8fd030"/><path d="M-42 54 L-38 26 Q-30 16 -16 12 L10 10 Q30 14 42 24 L48 54Z" fill="#c9d6ec"/><path d="M-14 12 L-8 34 L-2 18 L4 10Z" fill="#a8806a"/><path d="M-18 12 L-8 36 L-12 14Z" fill="#aab9d6"/><ellipse cx="-2" cy="-26" rx="19.5" ry="16" fill="#25231f" /><ellipse cx="-2" cy="-13" rx="18" ry="26" fill="#b98b72" /><ellipse cx="-3" cy="-22" rx="13" ry="9" fill="#c79a80" /><path d="M-20 -8 Q-18 16 -2 16 Q14 16 16 -8 Q8 2 -2 0 Q-12 2 -20 -8Z" fill="#8a786e"/><path d="M-21 -22 Q-2 -46 17 -22 Q-2 -32 -21 -22Z" fill="#25231f"/><ellipse cx="-10" cy="-17" rx="4.4" ry="2.2" fill="#3a2c26" /><ellipse cx="6" cy="-17" rx="4.4" ry="2.2" fill="#3a2c26" /></g></g></svg>
<span id="t43" style="top:248.74px;font-size:18.5px;color:#333333;letter-spacing:0.208px;left:709.00px;">Dominic GM/CEO</span>
<div style="left:911px;top:250.6px;width:13.6px;height:13.6px;background:#8080ee;border-radius:50%;"></div>
<span id="t44" style="top:248.74px;font-size:18.5px;color:#333333;letter-spacing:0.334px;left:930.80px;">On Track</span>
<svg style="left:1229.5px;top:239.3px;" width="36" height="36" viewBox="-18 -18 36 36"><path d="M1.85 -13.20 A13.325 13.325 0 0 1 4.99 -12.35" fill="none" stroke="#d4351c" stroke-width="8.25"/><path d="M4.99 -12.35 A13.325 13.325 0 0 1 0.00 13.32" fill="none" stroke="#3f9a85" stroke-width="8.25"/><path d="M0.00 13.32 A13.325 13.325 0 0 1 -3.45 12.87" fill="none" stroke="#c5b9f5" stroke-width="8.25"/><path d="M-3.45 12.87 A13.325 13.325 0 0 1 -9.90 8.92" fill="none" stroke="#8080ee" stroke-width="8.25"/><path d="M-9.90 8.92 A13.325 13.325 0 0 1 -8.57 -10.21" fill="none" stroke="#9bb800" stroke-width="8.25"/><path d="M-8.57 -10.21 A13.325 13.325 0 0 1 -5.63 -12.08" fill="none" stroke="#fdc010" stroke-width="8.25"/><path d="M-5.63 -12.08 A13.325 13.325 0 0 1 1.85 -13.20" fill="none" stroke="#f0dc00" stroke-width="8.25"/></svg>
<span id="t45" style="top:248.74px;font-size:18.5px;color:#333333;letter-spacing:-0.393px;left:1322.70px;transform:scaleX(1.08);transform-origin:left center;">11/20/2023</span>
<div style="left:293px;top:299px;width:1234px;height:66px;background:#fff;border-radius:6px 0 0 0;box-shadow:0 0 0 1px #ececec;"></div>
<svg style="left:333.8px;top:327.25px;" width="11.4" height="8.3" viewBox="-2 -2 11.4 8.3"><path d="M0 0 L3.7 4.3 L7.4 0" fill="none" stroke="#6a6f8a" stroke-width="1.5" stroke-linecap="round" stroke-linejoin="round"/></svg>
<span id="t46" style="top:322.84px;font-size:18.5px;color:#242424;letter-spacing:0.846px;left:364.30px;-webkit-text-stroke:0.65px #242424;">Marketing</span>
<div style="left:464.8px;top:321.8px;width:20.2px;height:20.2px;background:#d9d9d9;border-radius:50%;"></div>
<span id="t47" style="top:325.84px;font-size:12px;color:#333;left:274.90px;width:400px;text-align:center;-webkit-text-stroke:0.3px #333;">5</span>
<div style="left:293px;top:365px;width:1234px;height:56px;background:#fff;"></div>
<div style="left:293px;top:364px;width:1234px;height:2px;background:#eeeeee;"></div>
<div style="left:659px;top:365px;width:2px;height:56px;background:#efefef;"></div>
<div style="left:900.5px;top:365px;width:2px;height:56px;background:#efefef;"></div>
<div style="left:1057px;top:365px;width:2px;height:56px;background:#efefef;"></div>
<div style="left:1181.8px;top:365px;width:2px;height:56px;background:#efefef;"></div>
<div style="left:1311.8px;top:365px;width:2px;height:56px;background:#efefef;"></div>
<div style="left:1507px;top:365px;width:2px;height:56px;background:#efefef;"></div>
<div style="left:292.7px;top:367px;width:5.4px;height:52px;background:#6f6f6f;"></div>
<svg style="left:324.4px;top:381.1px;" width="27" height="24.0" viewBox="0 0 576 512"><path fill="#ffc107" d="M259.3 17.8L194 150.2 47.9 171.5c-26.2 3.8-36.7 36.1-17.700 54.600l105.700 103-25 145.500c-4.500 26.300 23.200 46 46.400 33.700L288 439.600l130.700 68.700c23.200 12.200 50.900-7.400 46.400-33.700l-25-145.500 105.700-103c19-18.500 8.500-50.800-17.700-54.600L382 150.200 316.700 17.800c-11.700-23.600-45.600-23.900-57.400 0z"/></svg>
<span id="t48" style="top:382.64px;font-size:18.5px;color:#333333;letter-spacing:0.437px;left:364.10px;">"Product Push" Marketing Cam...</span>
<svg style="left:669.60px;top:378.10px" width="29.40" height="29.40" viewBox="-50 -50 100 100"><defs><clipPath id="c3"><circle r="50"/></clipPath><filter id="f3" x="-20%" y="-20%" width="140%" height="140%"><feGaussianBlur stdDeviation="1.9"/></filter></defs><g clip-path="url(#c3)"><g filter="url(#f3)"><rect x="-60" y="-60" width="120" height="120" fill="#e9dccb"/><rect x="-52" y="-52" width="26" height="104" fill="#dcc7ac"/><rect x="18" y="-52" width="40" height="104" fill="#e9e3d6"/><rect x="20" y="-12" width="36" height="9" fill="#a9c0df"/><rect x="20" y="6" width="36" height="10" fill="#7f9cc4"/><rect x="20" y="-28" width="36" height="7" fill="#8a6a48"/><path d="M-50 52 L-46 28 Q-30 18 -14 20 L0 34 L14 20 Q32 18 46 28 L50 52Z" fill="#3b1c2c"/><path d="M-14 20 L0 36 L14 20 L10 8 L-10 8Z" fill="#dcae96"/><ellipse cx="0" cy="-24" rx="22" ry="16" fill="#6e4c3b" /><ellipse cx="0" cy="-6" rx="17" ry="24" fill="#e3b7a0" /><path d="M-18 -22 Q0 -44 20 -24 Q0 -30 -18 -22Z" fill="#5f4032"/><path d="M-17 0 Q-14 30 0 32 Q14 30 17 0 Q10 12 0 10 Q-10 12 -17 0Z" fill="#8a5638"/><ellipse cx="-7" cy="-8" rx="3.6" ry="1.8" fill="#3f2c26" /><ellipse cx="8" cy="-8" rx="3.6" ry="1.8" fill="#3f2c26" /></g></g></svg>
<span id="t49" style="top:384.74px;font-size:18.5px;color:#333333;letter-spacing:0.504px;left:709.00px;">Tanner Marketing</span>
<div style="left:911px;top:386.6px;width:13.6px;height:13.6px;background:#6f6f6f;border-radius:50%;"></div>
<span id="t50" style="top:384.74px;font-size:18.5px;color:#333333;letter-spacing:0.237px;left:930.80px;">On Hold</span>
<svg style="left:1229.5px;top:375.3px;" width="36" height="36" viewBox="-18 -18 36 36"><path d="M-1.85 -13.20 A13.325 13.325 0 0 1 10.21 -8.57" fill="none" stroke="#9bb800" stroke-width="8.25"/><path d="M10.21 -8.57 A13.325 13.325 0 0 1 12.08 -5.63" fill="none" stroke="#fdc010" stroke-width="8.25"/><path d="M12.08 -5.63 A13.325 13.325 0 0 1 13.27 1.16" fill="none" stroke="#f0dc00" stroke-width="8.25"/><path d="M13.27 1.16 A13.325 13.325 0 0 1 0.00 13.32" fill="none" stroke="#3f9a85" stroke-width="8.25"/><path d="M0.00 13.32 A13.325 13.325 0 0 1 -11.54 6.66" fill="none" stroke="#c5b9f5" stroke-width="8.25"/><path d="M-11.54 6.66 A13.325 13.325 0 0 1 -1.85 -13.20" fill="none" stroke="#8080ee" stroke-width="8.25"/></svg>
<span id="t51" style="top:384.74px;font-size:18.5px;color:#333333;letter-spacing:0.294px;left:1322.70px;transform:scaleX(1.08);transform-origin:left center;">6/3/2023</span>
<div style="left:293px;top:421px;width:1234px;height:56px;background:#fff;"></div>
<div style="left:293px;top:420px;width:1234px;height:2px;background:#eeeeee;"></div>
<div style="left:659px;top:421px;width:2px;height:56px;background:#efefef;"></div>
<div style="left:900.5px;top:421px;width:2px;height:56px;background:#efefef;"></div>
<div style="left:1057px;top:421px;width:2px;height:56px;background:#efefef;"></div>
<div style="left:1181.8px;top:421px;width:2px;height:56px;background:#efefef;"></div>
<div style="left:1311.8px;top:421px;width:2px;height:56px;background:#efefef;"></div>
<div style="left:1507px;top:421px;width:2px;height:56px;background:#efefef;"></div>
<div style="left:292.7px;top:423px;width:5.4px;height:52px;background:#3f9a85;"></div>
<svg style="left:324.4px;top:437.1px;" width="27" height="24.0" viewBox="0 0 576 512"><path fill="#ffc107" d="M259.3 17.8L194 150.2 47.9 171.5c-26.2 3.8-36.7 36.1-17.700 54.600l105.700 103-25 145.500c-4.500 26.300 23.200 46 46.400 33.700L288 439.600l130.700 68.700c23.200 12.200 50.900-7.400 46.400-33.700l-25-145.500 105.700-103c19-18.500 8.500-50.800-17.700-54.600L382 150.200 316.700 17.800c-11.700-23.600-45.600-23.900-57.400 0z"/></svg>
<span id="t52" style="top:438.64px;font-size:18.5px;color:#333333;letter-spacing:0.532px;left:364.10px;">2025 Marketing Campaign</span>
<svg style="left:669.60px;top:434.10px" width="29.40" height="29.40" viewBox="-50 -50 100 100"><defs><clipPath id="c4"><circle r="50"/></clipPath><filter id="f4" x="-20%" y="-20%" width="140%" height="140%"><feGaussianBlur stdDeviation="1.9"/></filter></defs><g clip-path="url(#c4)"><g filter="url(#f4)"><rect x="-60" y="-60" width="120" height="120" fill="#f6f6f8"/><ellipse cx="5" cy="1" rx="45" ry="46" fill="#38241e" /><ellipse cx="-27" cy="22" rx="22" ry="26" fill="#38241e" /><ellipse cx="30" cy="16" rx="22" ry="30" fill="#3e2922" /><ellipse cx="-20" cy="-22" rx="10" ry="8" fill="#4e342a" /><ellipse cx="30" cy="-10" rx="9" ry="12" fill="#4e342a" /><path d="M-14 16 L-15 48 L17 48 L15 16Z" fill="#d39a7b"/><path d="M-40 58 Q-20 40 0 44 Q22 40 40 58Z" fill="#ebe9ea"/><ellipse cx="0" cy="-3" rx="21" ry="25.5" fill="#e6b195" /><ellipse cx="-3" cy="-12" rx="14" ry="11" fill="#f3cfb8" /><ellipse cx="-9" cy="6" rx="6" ry="5" fill="#eab9a0" /><ellipse cx="10" cy="6" rx="6" ry="5" fill="#e6b197" /><path d="M-4 -32 Q26 -30 22 4 Q14 -18 -4 -32Z" fill="#38241e"/><path d="M-20 -12 Q-18 -30 -2 -31 Q-14 -22 -20 -12Z" fill="#38241e"/><ellipse cx="-9" cy="-7" rx="4" ry="2" fill="#4a3029" /><ellipse cx="9" cy="-7" rx="4" ry="2" fill="#4a3029" /><ellipse cx="0" cy="11" rx="10" ry="5" fill="#ffffff" /><path d="M-9 9 Q0 13 9 9 Q0 11 -9 9Z" fill="#b8695e"/></g></g></svg>
<span id="t53" style="top:440.74px;font-size:18.5px;color:#333333;letter-spacing:0.553px;left:709.00px;">Marlow Marketing</span>
<div style="left:911px;top:442.6px;width:13.6px;height:13.6px;background:#3f9a85;border-radius:50%;"></div>
<span id="t54" style="top:440.74px;font-size:18.5px;color:#333333;letter-spacing:0.445px;left:930.80px;">Complete</span>
<svg style="left:1068.0px;top:439.6px;" width="14.6" height="16" viewBox="0 0 14.6 16"><rect x="0.2" y="2.2" width="14.2" height="13.6" rx="1.4" fill="#2397b6"/><rect x="3.0" y="0.2" width="2.0" height="3.6" rx="0.6" fill="#2397b6"/><rect x="9.6" y="0.2" width="2.0" height="3.6" rx="0.6" fill="#2397b6"/><rect x="0.2" y="5.2" width="14.2" height="1.0" fill="#fff"/><rect x="2.0" y="7.6" width="2.4" height="2.2" fill="#fff"/><rect x="5.8" y="7.6" width="2.4" height="2.2" fill="#fff"/><rect x="9.6" y="7.6" width="2.4" height="2.2" fill="#fff"/><rect x="2.0" y="11.2" width="2.4" height="2.2" fill="#fff"/><rect x="5.8" y="11.2" width="2.4" height="2.2" fill="#fff"/><rect x="9.6" y="11.2" width="2.4" height="2.2" fill="#fff"/></svg>
<span id="t55" style="top:442.44px;font-size:18.5px;color:#666;letter-spacing:-0.005px;left:1087.80px;">4/14</span>
<svg style="left:1229.5px;top:431.3px;" width="36" height="36" viewBox="-18 -18 36 36"><circle cx="0" cy="0" r="13.325" fill="none" stroke="#c5b9f5" stroke-width="8.25"/></svg>
<span id="t56" style="top:440.74px;font-size:18.5px;color:#333333;letter-spacing:0.474px;left:1322.70px;transform:scaleX(1.08);transform-origin:left center;">4/9</span>
<div style="left:293px;top:477px;width:1234px;height:56px;background:#fff;"></div>
<div style="left:293px;top:476px;width:1234px;height:2px;background:#eeeeee;"></div>
<div style="left:659px;top:477px;width:2px;height:56px;background:#efefef;"></div>
<div style="left:900.5px;top:477px;width:2px;height:56px;background:#efefef;"></div>
<div style="left:1057px;top:477px;width:2px;height:56px;background:#efefef;"></div>
<div style="left:1181.8px;top:477px;width:2px;height:56px;background:#efefef;"></div>
<div style="left:1311.8px;top:477px;width:2px;height:56px;background:#efefef;"></div>
<div style="left:1507px;top:477px;width:2px;height:56px;background:#efefef;"></div>
<div style="left:292.7px;top:479px;width:5.4px;height:52px;background:#8080ee;border-radius:0 0 0 3px;"></div>
<svg style="left:324.4px;top:493.1px;" width="27" height="24.0" viewBox="0 0 576 512"><path fill="#ffc107" d="M259.3 17.8L194 150.2 47.9 171.5c-26.2 3.8-36.7 36.1-17.700 54.600l105.700 103-25 145.500c-4.500 26.300 23.200 46 46.400 33.700L288 439.600l130.700 68.700c23.200 12.200 50.900-7.400 46.400-33.700l-25-145.500 105.700-103c19-18.500 8.500-50.800-17.700-54.600L382 150.200 316.700 17.800c-11.700-23.600-45.600-23.900-57.400 0z"/></svg>
<span id="t57" style="top:494.64px;font-size:18.5px;color:#333333;letter-spacing:0.428px;left:364.10px;">Sports Media Market Campaign</span>
<svg style="left:669.60px;top:490.10px" width="29.40" height="29.40" viewBox="-50 -50 100 100"><defs><clipPath id="c5"><circle r="50"/></clipPath><filter id="f5" x="-20%" y="-20%" width="140%" height="140%"><feGaussianBlur stdDeviation="1.9"/></filter></defs><g clip-path="url(#c5)"><g filter="url(#f5)"><rect x="-60" y="-60" width="120" height="120" fill="#f6f6f8"/><ellipse cx="5" cy="1" rx="45" ry="46" fill="#38241e" /><ellipse cx="-27" cy="22" rx="22" ry="26" fill="#38241e" /><ellipse cx="30" cy="16" rx="22" ry="30" fill="#3e2922" /><ellipse cx="-20" cy="-22" rx="10" ry="8" fill="#4e342a" /><ellipse cx="30" cy="-10" rx="9" ry="12" fill="#4e342a" /><path d="M-14 16 L-15 48 L17 48 L15 16Z" fill="#d39a7b"/><path d="M-40 58 Q-20 40 0 44 Q22 40 40 58Z" fill="#ebe9ea"/><ellipse cx="0" cy="-3" rx="21" ry="25.5" fill="#e6b195" /><ellipse cx="-3" cy="-12" rx="14" ry="11" fill="#f3cfb8" /><ellipse cx="-9" cy="6" rx="6" ry="5" fill="#eab9a0" /><ellipse cx="10" cy="6" rx="6" ry="5" fill="#e6b197" /><path d="M-4 -32 Q26 -30 22 4 Q14 -18 -4 -32Z" fill="#38241e"/><path d="M-20 -12 Q-18 -30 -2 -31 Q-14 -22 -20 -12Z" fill="#38241e"/><ellipse cx="-9" cy="-7" rx="4" ry="2" fill="#4a3029" /><ellipse cx="9" cy="-7" rx="4" ry="2" fill="#4a3029" /><ellipse cx="0" cy="11" rx="10" ry="5" fill="#ffffff" /><path d="M-9 9 Q0 13 9 9 Q0 11 -9 9Z" fill="#b8695e"/></g></g></svg>
<span id="t58" style="top:496.74px;font-size:18.5px;color:#333333;letter-spacing:0.553px;left:709.00px;">Marlow Marketing</span>
<div style="left:911px;top:498.6px;width:13.6px;height:13.6px;background:#8080ee;border-radius:50%;"></div>
<span id="t59" style="top:496.74px;font-size:18.5px;color:#333333;letter-spacing:0.334px;left:930.80px;">On Track</span>
<svg style="left:1068.0px;top:495.6px;" width="14.6" height="16" viewBox="0 0 14.6 16"><rect x="0.2" y="2.2" width="14.2" height="13.6" rx="1.4" fill="#2397b6"/><rect x="3.0" y="0.2" width="2.0" height="3.6" rx="0.6" fill="#2397b6"/><rect x="9.6" y="0.2" width="2.0" height="3.6" rx="0.6" fill="#2397b6"/><rect x="0.2" y="5.2" width="14.2" height="1.0" fill="#fff"/><rect x="2.0" y="7.6" width="2.4" height="2.2" fill="#fff"/><rect x="5.8" y="7.6" width="2.4" height="2.2" fill="#fff"/><rect x="9.6" y="7.6" width="2.4" height="2.2" fill="#fff"/><rect x="2.0" y="11.2" width="2.4" height="2.2" fill="#fff"/><rect x="5.8" y="11.2" width="2.4" height="2.2" fill="#fff"/><rect x="9.6" y="11.2" width="2.4" height="2.2" fill="#fff"/></svg>
<span id="t60" style="top:498.44px;font-size:18.5px;color:#666;letter-spacing:-0.605px;left:1087.80px;">9/17</span>
<svg style="left:1229.5px;top:487.3px;" width="36" height="36" viewBox="-18 -18 36 36"><circle cx="0" cy="0" r="13.325" fill="none" stroke="#c5b9f5" stroke-width="8.25"/><path d="M12.52 4.56 A13.325 13.325 0 0 1 4.56 12.52" fill="none" stroke="#8080ee" stroke-width="8.25"/><path d="M4.56 12.52 A13.325 13.325 0 0 1 0.00 13.32" fill="none" stroke="#3f9a85" stroke-width="8.25"/></svg>
<span id="t61" style="top:496.74px;font-size:18.5px;color:#333333;letter-spacing:0.185px;left:1322.70px;transform:scaleX(1.08);transform-origin:left center;">6/27/2024</span>
<div style="left:316px;top:538px;width:1211px;height:54px;background:#fff;border-radius:6px 0 0 0;box-shadow:0 0 0 1px #ececec;"></div>
<svg style="left:330.5px;top:560.25px;" width="11.4" height="8.3" viewBox="-2 -2 11.4 8.3"><path d="M0 0 L3.7 4.3 L7.4 0" fill="none" stroke="#6a6f8a" stroke-width="1.5" stroke-linecap="round" stroke-linejoin="round"/></svg>
<span id="t62" style="top:555.84px;font-size:18.5px;color:#242424;letter-spacing:0.701px;left:360.40px;-webkit-text-stroke:0.65px #242424;">Social Media Marketing</span>
<div style="left:579.9px;top:554.8px;width:20.2px;height:20.2px;background:#d9d9d9;border-radius:50%;"></div>
<span id="t63" style="top:558.84px;font-size:12px;color:#333;left:390.00px;width:400px;text-align:center;-webkit-text-stroke:0.3px #333;">2</span>
<div style="left:316px;top:592.4px;width:1211px;height:55.8px;background:#fff;"></div>
<div style="left:316px;top:591.4px;width:1211px;height:2px;background:#eeeeee;"></div>
<div style="left:659px;top:592.4px;width:2px;height:55.8px;background:#efefef;"></div>
<div style="left:900.5px;top:592.4px;width:2px;height:55.8px;background:#efefef;"></div>
<div style="left:1057px;top:592.4px;width:2px;height:55.8px;background:#efefef;"></div>
<div style="left:1181.8px;top:592.4px;width:2px;height:55.8px;background:#efefef;"></div>
<div style="left:1311.8px;top:592.4px;width:2px;height:55.8px;background:#efefef;"></div>
<div style="left:1507px;top:592.4px;width:2px;height:55.8px;background:#efefef;"></div>
<div style="left:315.7px;top:594.4px;width:5.4px;height:51.8px;background:#8080ee;"></div>
<svg style="left:347.4px;top:608.4px;" width="27" height="24.0" viewBox="0 0 576 512"><path fill="#b8b8b8" d="M259.3 17.8L194 150.2 47.9 171.5c-26.2 3.8-36.7 36.1-17.700 54.600l105.700 103-25 145.500c-4.500 26.300 23.200 46 46.400 33.700L288 439.600l130.700 68.700c23.200 12.200 50.900-7.400 46.400-33.700l-25-145.500 105.700-103c19-18.500 8.500-50.800-17.700-54.600L382 150.200 316.700 17.800c-11.700-23.600-45.600-23.900-57.400 0z"/></svg>
<span id="t64" style="top:609.94px;font-size:18.5px;color:#333333;letter-spacing:0.381px;left:387.10px;">Instagram Marketing Campai...</span>
<svg style="left:669.60px;top:605.40px" width="29.40" height="29.40" viewBox="-50 -50 100 100"><defs><clipPath id="c6"><circle r="50"/></clipPath><filter id="f6" x="-20%" y="-20%" width="140%" height="140%"><feGaussianBlur stdDeviation="1.9"/></filter></defs><g clip-path="url(#c6)"><g filter="url(#f6)"><rect x="-60" y="-60" width="120" height="120" fill="#f6f6f8"/><ellipse cx="5" cy="1" rx="45" ry="46" fill="#38241e" /><ellipse cx="-27" cy="22" rx="22" ry="26" fill="#38241e" /><ellipse cx="30" cy="16" rx="22" ry="30" fill="#3e2922" /><ellipse cx="-20" cy="-22" rx="10" ry="8" fill="#4e342a" /><ellipse cx="30" cy="-10" rx="9" ry="12" fill="#4e342a" /><path d="M-14 16 L-15 48 L17 48 L15 16Z" fill="#d39a7b"/><path d="M-40 58 Q-20 40 0 44 Q22 40 40 58Z" fill="#ebe9ea"/><ellipse cx="0" cy="-3" rx="21" ry="25.5" fill="#e6b195" /><ellipse cx="-3" cy="-12" rx="14" ry="11" fill="#f3cfb8" /><ellipse cx="-9" cy="6" rx="6" ry="5" fill="#eab9a0" /><ellipse cx="10" cy="6" rx="6" ry="5" fill="#e6b197" /><path d="M-4 -32 Q26 -30 22 4 Q14 -18 -4 -32Z" fill="#38241e"/><path d="M-20 -12 Q-18 -30 -2 -31 Q-14 -22 -20 -12Z" fill="#38241e"/><ellipse cx="-9" cy="-7" rx="4" ry="2" fill="#4a3029" /><ellipse cx="9" cy="-7" rx="4" ry="2" fill="#4a3029" /><ellipse cx="0" cy="11" rx="10" ry="5" fill="#ffffff" /><path d="M-9 9 Q0 13 9 9 Q0 11 -9 9Z" fill="#b8695e"/></g></g></svg>
<span id="t65" style="top:612.04px;font-size:18.5px;color:#333333;letter-spacing:0.553px;left:709.00px;">Marlow Marketing</span>
<div style="left:911px;top:613.9px;width:13.6px;height:13.6px;background:#8080ee;border-radius:50%;"></div>
<span id="t66" style="top:612.04px;font-size:18.5px;color:#333333;letter-spacing:0.334px;left:930.80px;">On Track</span>
<svg style="left:1229.5px;top:602.5999999999999px;" width="36" height="36" viewBox="-18 -18 36 36"><circle cx="0" cy="0" r="13.325" fill="none" stroke="#c5b9f5" stroke-width="8.25"/></svg>
<span id="t67" style="top:612.04px;font-size:18.5px;color:#333333;letter-spacing:-0.585px;left:1322.70px;transform:scaleX(1.08);transform-origin:left center;">4/21</span>
<div style="left:316px;top:648.2px;width:1211px;height:55.8px;background:#fff;"></div>
<div style="left:316px;top:647.2px;width:1211px;height:2px;background:#eeeeee;"></div>
<div style="left:659px;top:648.2px;width:2px;height:55.8px;background:#efefef;"></div>
<div style="left:900.5px;top:648.2px;width:2px;height:55.8px;background:#efefef;"></div>
<div style="left:1057px;top:648.2px;width:2px;height:55.8px;background:#efefef;"></div>
<div style="left:1181.8px;top:648.2px;width:2px;height:55.8px;background:#efefef;"></div>
<div style="left:1311.8px;top:648.2px;width:2px;height:55.8px;background:#efefef;"></div>
<div style="left:1507px;top:648.2px;width:2px;height:55.8px;background:#efefef;"></div>
<div style="left:315.7px;top:650.2px;width:5.4px;height:51.8px;background:#8080ee;border-radius:0 0 0 3px;"></div>
<svg style="left:347.4px;top:664.2px;" width="27" height="24.0" viewBox="0 0 576 512"><path fill="#b8b8b8" d="M259.3 17.8L194 150.2 47.9 171.5c-26.2 3.8-36.7 36.1-17.700 54.600l105.700 103-25 145.500c-4.500 26.300 23.200 46 46.400 33.700L288 439.600l130.700 68.700c23.200 12.200 50.900-7.400 46.400-33.700l-25-145.500 105.700-103c19-18.500 8.500-50.800-17.700-54.600L382 150.200 316.700 17.800c-11.700-23.600-45.600-23.900-57.400 0z"/></svg>
<span id="t68" style="top:665.74px;font-size:18.5px;color:#333333;letter-spacing:0.487px;left:387.10px;">TikTok Marketing Campaign</span>
<svg style="left:669.60px;top:661.20px" width="29.40" height="29.40" viewBox="-50 -50 100 100"><defs><clipPath id="c7"><circle r="50"/></clipPath><filter id="f7" x="-20%" y="-20%" width="140%" height="140%"><feGaussianBlur stdDeviation="1.9"/></filter></defs><g clip-path="url(#c7)"><g filter="url(#f7)"><rect x="-60" y="-60" width="120" height="120" fill="#f6f6f8"/><ellipse cx="5" cy="1" rx="45" ry="46" fill="#38241e" /><ellipse cx="-27" cy="22" rx="22" ry="26" fill="#38241e" /><ellipse cx="30" cy="16" rx="22" ry="30" fill="#3e2922" /><ellipse cx="-20" cy="-22" rx="10" ry="8" fill="#4e342a" /><ellipse cx="30" cy="-10" rx="9" ry="12" fill="#4e342a" /><path d="M-14 16 L-15 48 L17 48 L15 16Z" fill="#d39a7b"/><path d="M-40 58 Q-20 40 0 44 Q22 40 40 58Z" fill="#ebe9ea"/><ellipse cx="0" cy="-3" rx="21" ry="25.5" fill="#e6b195" /><ellipse cx="-3" cy="-12" rx="14" ry="11" fill="#f3cfb8" /><ellipse cx="-9" cy="6" rx="6" ry="5" fill="#eab9a0" /><ellipse cx="10" cy="6" rx="6" ry="5" fill="#e6b197" /><path d="M-4 -32 Q26 -30 22 4 Q14 -18 -4 -32Z" fill="#38241e"/><path d="M-20 -12 Q-18 -30 -2 -31 Q-14 -22 -20 -12Z" fill="#38241e"/><ellipse cx="-9" cy="-7" rx="4" ry="2" fill="#4a3029" /><ellipse cx="9" cy="-7" rx="4" ry="2" fill="#4a3029" /><ellipse cx="0" cy="11" rx="10" ry="5" fill="#ffffff" /><path d="M-9 9 Q0 13 9 9 Q0 11 -9 9Z" fill="#b8695e"/></g></g></svg>
<span id="t69" style="top:667.84px;font-size:18.5px;color:#333333;letter-spacing:0.553px;left:709.00px;">Marlow Marketing</span>
<div style="left:911px;top:669.7px;width:13.6px;height:13.6px;background:#8080ee;border-radius:50%;"></div>
<span id="t70" style="top:667.84px;font-size:18.5px;color:#333333;letter-spacing:0.334px;left:930.80px;">On Track</span>
<svg style="left:1229.5px;top:658.4px;" width="36" height="36" viewBox="-18 -18 36 36"><circle cx="0" cy="0" r="13.325" fill="none" stroke="#c5b9f5" stroke-width="8.25"/><path d="M2.77 13.03 A13.325 13.325 0 0 1 0.00 13.32" fill="none" stroke="#8080ee" stroke-width="8.25"/></svg>
<span id="t71" style="top:667.84px;font-size:18.5px;color:#333333;letter-spacing:-0.185px;left:1322.70px;transform:scaleX(1.08);transform-origin:left center;">12/3/2024</span>
<div style="left:293px;top:723px;width:1234px;height:66px;background:#fff;border-radius:6px 0 0 0;box-shadow:0 0 0 1px #ececec;"></div>
<svg style="left:333.8px;top:751.25px;" width="11.4" height="8.3" viewBox="-2 -2 11.4 8.3"><path d="M0 0 L3.7 4.3 L7.4 0" fill="none" stroke="#6a6f8a" stroke-width="1.5" stroke-linecap="round" stroke-linejoin="round"/></svg>
<span id="t72" style="top:746.84px;font-size:18.5px;color:#242424;letter-spacing:0.687px;left:364.30px;-webkit-text-stroke:0.65px #242424;">Recruitment</span>
<div style="left:483.40000000000003px;top:745.8px;width:20.2px;height:20.2px;background:#d9d9d9;border-radius:50%;"></div>
<span id="t73" style="top:749.84px;font-size:12px;color:#333;left:293.50px;width:400px;text-align:center;-webkit-text-stroke:0.3px #333;">2</span>
<div style="left:293px;top:789px;width:1234px;height:56px;background:#fff;"></div>
<div style="left:293px;top:788px;width:1234px;height:2px;background:#eeeeee;"></div>
<div style="left:659px;top:789px;width:2px;height:56px;background:#efefef;"></div>
<div style="left:900.5px;top:789px;width:2px;height:56px;background:#efefef;"></div>
<div style="left:1057px;top:789px;width:2px;height:56px;background:#efefef;"></div>
<div style="left:1181.8px;top:789px;width:2px;height:56px;background:#efefef;"></div>
<div style="left:1311.8px;top:789px;width:2px;height:56px;background:#efefef;"></div>
<div style="left:1507px;top:789px;width:2px;height:56px;background:#efefef;"></div>
<div style="left:292.7px;top:791px;width:5.4px;height:52px;background:#8080ee;"></div>
<svg style="left:324.4px;top:805.1px;" width="27" height="24.0" viewBox="0 0 576 512"><path fill="#b8b8b8" d="M259.3 17.8L194 150.2 47.9 171.5c-26.2 3.8-36.7 36.1-17.700 54.600l105.700 103-25 145.500c-4.500 26.300 23.200 46 46.400 33.700L288 439.600l130.700 68.700c23.200 12.200 50.900-7.400 46.400-33.700l-25-145.500 105.700-103c19-18.500 8.500-50.800-17.700-54.600L382 150.200 316.700 17.800c-11.700-23.600-45.600-23.900-57.400 0z"/></svg>
<span id="t74" style="top:806.64px;font-size:18.5px;color:#333333;letter-spacing:0.381px;left:364.10px;">Recruit training team</span>
<svg style="left:669.60px;top:802.10px" width="29.40" height="29.40" viewBox="-50 -50 100 100"><defs><clipPath id="c8"><circle r="50"/></clipPath><filter id="f8" x="-20%" y="-20%" width="140%" height="140%"><feGaussianBlur stdDeviation="1.9"/></filter></defs><g clip-path="url(#c8)"><g filter="url(#f8)"><rect x="-60" y="-60" width="120" height="120" fill="#c3d9e8"/><rect x="-52" y="-52" width="34" height="104" fill="#e6ecf0"/><rect x="20" y="8" width="34" height="8" fill="#cbbba4"/><path d="M10 22 L28 10 L54 6 L54 54 L-4 54Z" fill="#4f728a"/><path d="M-42 30 L-16 20 L-10 54 L-40 54Z" fill="#a9c4cc"/><path d="M-44 36 L-34 30 L-30 46 L-40 50Z" fill="#1c1c22"/><ellipse cx="-7" cy="-10" rx="33" ry="40" fill="#3c2424" /><path d="M-38 0 Q-40 30 -22 34 L-14 10Z" fill="#3c2424"/><ellipse cx="-16" cy="-30" rx="10" ry="8" fill="#4e2a2a" /><path d="M-13 12 L-14 54 L12 54 L12 12Z" fill="#b98f5c"/><ellipse cx="2" cy="-7" rx="17.5" ry="21" fill="#bf9865" /><ellipse cx="0" cy="2" rx="11" ry="9" fill="#d3ad76" /><path d="M-18 -8 Q-10 -34 22 -26 Q26 -14 22 -2 Q12 -22 -18 -8Z" fill="#3c2424"/><ellipse cx="-6" cy="-12" rx="5" ry="3" fill="#5a4030" /><ellipse cx="10" cy="-12" rx="5" ry="3" fill="#5a4030" /><path d="M-6 4 Q2 8 10 3 Q2 6 -6 4Z" fill="#a5645a"/></g></g></svg>
<span id="t75" style="top:808.74px;font-size:18.5px;color:#333333;letter-spacing:0.381px;left:709.00px;">Joanne Recruiter</span>
<div style="left:911px;top:810.6px;width:13.6px;height:13.6px;background:#8080ee;border-radius:50%;"></div>
<span id="t76" style="top:808.74px;font-size:18.5px;color:#333333;letter-spacing:0.334px;left:930.80px;">On Track</span>
<svg style="left:1229.5px;top:799.3px;" width="36" height="36" viewBox="-18 -18 36 36"><path d="M-12.52 4.56 A13.325 13.325 0 1 1 12.52 4.56" fill="none" stroke="#9bb800" stroke-width="8.25"/><path d="M12.52 4.56 A13.325 13.325 0 0 1 0.00 13.32" fill="none" stroke="#444444" stroke-width="8.25"/><path d="M0.00 13.32 A13.325 13.325 0 0 1 -12.52 4.56" fill="none" stroke="#8080ee" stroke-width="8.25"/></svg>
<span id="t77" style="top:808.74px;font-size:18.5px;color:#333333;letter-spacing:0.243px;left:1322.70px;transform:scaleX(1.08);transform-origin:left center;">6/25/2023</span>
<div style="left:293px;top:845px;width:1234px;height:56px;background:#fff;"></div>
<div style="left:293px;top:844px;width:1234px;height:2px;background:#eeeeee;"></div>
<div style="left:659px;top:845px;width:2px;height:56px;background:#efefef;"></div>
<div style="left:900.5px;top:845px;width:2px;height:56px;background:#efefef;"></div>
<div style="left:1057px;top:845px;width:2px;height:56px;background:#efefef;"></div>
<div style="left:1181.8px;top:845px;width:2px;height:56px;background:#efefef;"></div>
<div style="left:1311.8px;top:845px;width:2px;height:56px;background:#efefef;"></div>
<div style="left:1507px;top:845px;width:2px;height:56px;background:#efefef;"></div>
<div style="left:292.7px;top:847px;width:5.4px;height:52px;background:#8080ee;border-radius:0 0 0 3px;"></div>
<svg style="left:324.4px;top:861.1px;" width="27" height="24.0" viewBox="0 0 576 512"><path fill="#b8b8b8" d="M259.3 17.8L194 150.2 47.9 171.5c-26.2 3.8-36.7 36.1-17.700 54.600l105.700 103-25 145.500c-4.500 26.300 23.200 46 46.400 33.700L288 439.600l130.700 68.700c23.200 12.200 50.900-7.400 46.400-33.700l-25-145.500 105.700-103c19-18.500 8.500-50.800-17.700-54.600L382 150.200 316.700 17.800c-11.700-23.600-45.600-23.900-57.400 0z"/></svg>
<span id="t78" style="top:862.64px;font-size:18.5px;color:#333333;letter-spacing:0.310px;left:364.10px;">Recruiting sales team</span>
<svg style="left:669.60px;top:858.10px" width="29.40" height="29.40" viewBox="-50 -50 100 100"><defs><clipPath id="c9"><circle r="50"/></clipPath><filter id="f9" x="-20%" y="-20%" width="140%" height="140%"><feGaussianBlur stdDeviation="1.9"/></filter></defs><g clip-path="url(#c9)"><g filter="url(#f9)"><rect x="-60" y="-60" width="120" height="120" fill="#eceeed"/><path d="M-44 54 L-40 28 Q-28 16 -14 8 L-8 2 L18 2 L24 8 Q40 16 46 26 L48 54Z" fill="#1f2f5c"/><path d="M-12 6 L4 20 L20 6 L18 -2 L-10 -2Z" fill="#e4c4b4"/><path d="M-16 10 L-6 4 L2 18 L-8 26Z" fill="#18254a"/><path d="M24 10 L14 4 L6 18 L16 26Z" fill="#18254a"/><ellipse cx="4" cy="-19" rx="18" ry="24" fill="#ebcdbf" /><ellipse cx="4" cy="-32" rx="14" ry="10" fill="#f3dcd0" /><path d="M-12 -12 Q-10 10 4 10 Q18 10 21 -12 Q12 2 4 0 Q-4 2 -12 -12Z" fill="#a78c82"/><ellipse cx="-4" cy="-21" rx="3.2" ry="1.6" fill="#6a5650" /><ellipse cx="12" cy="-21" rx="3.2" ry="1.6" fill="#6a5650" /><ellipse cx="4" cy="38" rx="2.2" ry="2.2" fill="#6a6250" /></g></g></svg>
<span id="t79" style="top:864.74px;font-size:18.5px;color:#333333;letter-spacing:0.174px;left:709.00px;">Lloyd Sales</span>
<div style="left:911px;top:866.6px;width:13.6px;height:13.6px;background:#8080ee;border-radius:50%;"></div>
<span id="t80" style="top:864.74px;font-size:18.5px;color:#333333;letter-spacing:0.334px;left:930.80px;">On Track</span>
<svg style="left:1229.5px;top:855.3px;" width="36" height="36" viewBox="-18 -18 36 36"><path d="M-11.54 -6.66 A13.325 13.325 0 0 1 11.54 -6.66" fill="none" stroke="#9bb800" stroke-width="8.25"/><path d="M11.54 -6.66 A13.325 13.325 0 0 1 11.54 6.66" fill="none" stroke="#f0dc00" stroke-width="8.25"/><path d="M11.54 6.66 A13.325 13.325 0 0 1 0.00 13.32" fill="none" stroke="#444444" stroke-width="8.25"/><path d="M0.00 13.32 A13.325 13.325 0 0 1 -11.54 -6.66" fill="none" stroke="#8080ee" stroke-width="8.25"/></svg>
<span id="t81" style="top:864.74px;font-size:18.5px;color:#333333;letter-spacing:0.243px;left:1322.70px;transform:scaleX(1.08);transform-origin:left center;">5/20/2023</span>
<div style="left:293px;top:903px;width:1203px;height:6px;background:#d0d0d0;border-radius:3px;"></div>
<div style="left:1528px;top:0px;width:72px;height:914px;background:#fff;"></div>
<div style="left:1527px;top:0px;width:1px;height:914px;background:#e7e7e7;"></div>
<div style="left:1528px;top:55px;width:72px;height:1px;background:#e7e7e7;"></div>
<div style="left:1528px;top:99px;width:72px;height:1px;background:#e7e7e7;"></div>
<svg style="left:1546.20px;top:9.60px" width="36.00" height="36.00" viewBox="-50 -50 100 100"><defs><clipPath id="c10"><circle r="50"/></clipPath><filter id="f10" x="-20%" y="-20%" width="140%" height="140%"><feGaussianBlur stdDeviation="1.9"/></filter></defs><g clip-path="url(#c10)"><g filter="url(#f10)"><rect x="-60" y="-60" width="120" height="120" fill="#f6f6f8"/><ellipse cx="5" cy="1" rx="45" ry="46" fill="#38241e" /><ellipse cx="-27" cy="22" rx="22" ry="26" fill="#38241e" /><ellipse cx="30" cy="16" rx="22" ry="30" fill="#3e2922" /><ellipse cx="-20" cy="-22" rx="10" ry="8" fill="#4e342a" /><ellipse cx="30" cy="-10" rx="9" ry="12" fill="#4e342a" /><path d="M-14 16 L-15 48 L17 48 L15 16Z" fill="#d39a7b"/><path d="M-40 58 Q-20 40 0 44 Q22 40 40 58Z" fill="#ebe9ea"/><ellipse cx="0" cy="-3" rx="21" ry="25.5" fill="#e6b195" /><ellipse cx="-3" cy="-12" rx="14" ry="11" fill="#f3cfb8" /><ellipse cx="-9" cy="6" rx="6" ry="5" fill="#eab9a0" /><ellipse cx="10" cy="6" rx="6" ry="5" fill="#e6b197" /><path d="M-4 -32 Q26 -30 22 4 Q14 -18 -4 -32Z" fill="#38241e"/><path d="M-20 -12 Q-18 -30 -2 -31 Q-14 -22 -20 -12Z" fill="#38241e"/><ellipse cx="-9" cy="-7" rx="4" ry="2" fill="#4a3029" /><ellipse cx="9" cy="-7" rx="4" ry="2" fill="#4a3029" /><ellipse cx="0" cy="11" rx="10" ry="5" fill="#ffffff" /><path d="M-9 9 Q0 13 9 9 Q0 11 -9 9Z" fill="#b8695e"/></g></g></svg>
<div style="left:1566.2px;top:7.9px;width:20.2px;height:20.2px;background:#e07b66;border-radius:50%;"></div>
<span id="t82" style="top:11.72px;font-size:12.5px;color:#fff;left:1376.40px;width:400px;text-align:center;">34</span>
<div style="left:1570.4px;top:33.0px;width:14.2px;height:14.2px;background:#fff;border-radius:50%;"></div>
<div style="left:1571.6px;top:34.2px;width:11.8px;height:11.8px;background:#3f9a85;border-radius:50%;"></div>
<svg style="left:1554.4px;top:61px;" width="19.4" height="15" viewBox="0 0 19.4 15"><path d="M12.6 5.2 Q19.2 5.6 19.2 9.6 Q19.2 11.6 17.6 12.8 L18.8 14.8 L15.4 13.9 Q13.9 14.3 12.2 14.1 Q9.4 13.7 8.4 11.8 Q13.4 11.0 13.4 6.4Z" fill="#2397b6"/><path d="M6.6 0.3 Q12.9 0.3 12.9 5.2 Q12.9 10.1 6.6 10.1 Q5.4 10.1 4.3 9.8 L0.9 11.2 L2.0 8.6 Q0.3 7.2 0.3 5.2 Q0.3 0.3 6.6 0.3Z" fill="#2397b6" stroke="#fff" stroke-width="0.8"/></svg>
<span id="t83" style="top:81.56px;font-size:18px;color:#333;font-weight:500;letter-spacing:0.414px;left:1364.30px;width:400px;text-align:center;text-indent:0.414px;transform:scaleX(1.1);transform-origin:center center;-webkit-text-stroke:0.3px #333;">Chat</span>
<svg style="left:1545.80px;top:112.70px" width="36.00" height="36.00" viewBox="-50 -50 100 100"><defs><clipPath id="c11"><circle r="50"/></clipPath><filter id="f11" x="-20%" y="-20%" width="140%" height="140%"><feGaussianBlur stdDeviation="1.9"/></filter></defs><g clip-path="url(#c11)"><g filter="url(#f11)"><rect x="-60" y="-60" width="120" height="120" fill="#f5f7f5"/><path d="M-50 -26 L-40 -38 L-18 -38 L-16 -26Z" fill="#3f4c4a"/><rect x="-52" y="-28" width="40" height="32" fill="#ae5f5a"/><path d="M14 -22 L24 -30 L36 -24 L42 -30 L54 -22 L54 4 L14 4Z" fill="#b0605a"/><rect x="-52" y="-16" width="104" height="2.4" fill="#d9c2bc"/><rect x="-52" y="-6" width="104" height="2.4" fill="#cfb2ac"/><rect x="-52" y="2" width="104" height="5" fill="#cfd2cf"/><rect x="-52" y="5" width="104" height="4" fill="#3c4c40"/><rect x="-52" y="8" width="104" height="46" fill="#8fd030"/><path d="M-42 54 L-38 26 Q-30 16 -16 12 L10 10 Q30 14 42 24 L48 54Z" fill="#c9d6ec"/><path d="M-14 12 L-8 34 L-2 18 L4 10Z" fill="#a8806a"/><path d="M-18 12 L-8 36 L-12 14Z" fill="#aab9d6"/><ellipse cx="-2" cy="-26" rx="19.5" ry="16" fill="#25231f" /><ellipse cx="-2" cy="-13" rx="18" ry="26" fill="#b98b72" /><ellipse cx="-3" cy="-22" rx="13" ry="9" fill="#c79a80" /><path d="M-20 -8 Q-18 16 -2 16 Q14 16 16 -8 Q8 2 -2 0 Q-12 2 -20 -8Z" fill="#8a786e"/><path d="M-21 -22 Q-2 -46 17 -22 Q-2 -32 -21 -22Z" fill="#25231f"/><ellipse cx="-10" cy="-17" rx="4.4" ry="2.2" fill="#3a2c26" /><ellipse cx="6" cy="-17" rx="4.4" ry="2.2" fill="#3a2c26" /></g></g></svg>
<svg style="left:1545.80px;top:167.54px" width="36.00" height="36.00" viewBox="-50 -50 100 100"><defs><clipPath id="c12"><circle r="50"/></clipPath><filter id="f12" x="-20%" y="-20%" width="140%" height="140%"><feGaussianBlur stdDeviation="1.9"/></filter></defs><g clip-path="url(#c12)"><g filter="url(#f12)"><rect x="-60" y="-60" width="120" height="120" fill="#ffffff"/><path d="M-38 54 L-34 30 Q-18 18 -2 24 Q16 18 32 28 L38 54Z" fill="#5e2740"/><path d="M-10 14 L-12 26 Q0 32 12 26 L10 14Z" fill="#dcb8a6"/><ellipse cx="-1" cy="-22" rx="20" ry="16" fill="#2d1f1b" /><path d="M-8 -36 Q4 -46 16 -32Z" fill="#2d1f1b"/><ellipse cx="0" cy="-3" rx="16" ry="22" fill="#e6c5b3" /><ellipse cx="-1" cy="-10" rx="11" ry="8" fill="#f0d6c8" /><path d="M-16 -16 Q-14 -32 2 -30 Q16 -30 18 -12 Q8 -24 -16 -16Z" fill="#2d1f1b"/><path d="M-14 4 Q-12 22 0 22 Q12 22 14 4 Q8 12 0 11 Q-8 12 -14 4Z" fill="#ad8f80"/><ellipse cx="-7" cy="-8" rx="4" ry="2.2" fill="#4a3430" /><ellipse cx="7" cy="-8" rx="4" ry="2.2" fill="#4a3430" /></g></g></svg>
<svg style="left:1545.80px;top:222.38px" width="36.00" height="36.00" viewBox="-50 -50 100 100"><defs><clipPath id="c13"><circle r="50"/></clipPath><filter id="f13" x="-20%" y="-20%" width="140%" height="140%"><feGaussianBlur stdDeviation="1.9"/></filter></defs><g clip-path="url(#c13)"><g filter="url(#f13)"><rect x="-60" y="-60" width="120" height="120" fill="#e6ebf5"/><path d="M-52 10 L-30 4 L-4 52 L-52 52Z" fill="#1c2170"/><path d="M-10 54 Q0 26 40 24 L54 30 L54 54Z" fill="#e2a670"/><ellipse cx="-10" cy="-18" rx="28" ry="26" fill="#1e1e22" /><ellipse cx="16" cy="-6" rx="6" ry="18" fill="#1e1e22" /><ellipse cx="-8" cy="0" rx="21" ry="27" fill="#c99676"  transform="rotate(-12 -8 0)"/><path d="M-28 4 Q-10 48 16 6 Q12 22 -6 24 Q-22 24 -28 4Z" fill="#3a2a24"/><ellipse cx="-10" cy="16" rx="8" ry="4.2" fill="#f4efe8"  transform="rotate(-12 -10 16)"/><path d="M-28 -4 L10 -12" stroke="#6a5a58" stroke-width="2.2" fill="none"/></g></g></svg>
<svg style="left:1545.80px;top:277.22px" width="36.00" height="36.00" viewBox="-50 -50 100 100"><defs><clipPath id="c14"><circle r="50"/></clipPath><filter id="f14" x="-20%" y="-20%" width="140%" height="140%"><feGaussianBlur stdDeviation="1.9"/></filter></defs><g clip-path="url(#c14)"><g filter="url(#f14)"><rect x="-60" y="-60" width="120" height="120" fill="#dcdcde"/><rect x="-52" y="-52" width="36" height="104" fill="#d0d0d3"/><path d="M-30 54 L-26 38 Q-10 30 8 36 L34 30 L44 54Z" fill="#7d8a94"/><path d="M22 30 Q34 28 38 40 L30 46Z" fill="#1e1e20"/><ellipse cx="5" cy="-2" rx="31" ry="42" fill="#e2a99b" /><ellipse cx="2" cy="-22" rx="26" ry="18" fill="#ebbcb0" /><ellipse cx="-8" cy="6" rx="14" ry="14" fill="#e8a79c" /><path d="M18 -40 Q40 -30 36 -4 L30 -6 Q32 -26 18 -40Z" fill="#9c8c8a"/><ellipse cx="34" cy="2" rx="5" ry="9" fill="#d99a8c" /><path d="M-22 28 Q2 46 30 26 Q4 36 -22 28Z" fill="#c9b0a8"/><path d="M-36 -4 L32 -7" stroke="#8b8a92" stroke-width="1.8" fill="none"/><ellipse cx="-12" cy="-2" rx="5" ry="2.6" fill="#7a9a8a" /><ellipse cx="12" cy="-3" rx="5" ry="2.6" fill="#7a9a8a" /><path d="M-14 18 Q0 22 12 17 Q0 20 -14 18Z" fill="#b3746c"/></g></g></svg>
<div style="left:1545.8px;top:332.06px;width:36px;height:36px;background:#2799b7;border-radius:50%;"></div>
<span id="t84" style="top:341.65px;font-size:17.5px;color:#fff;font-weight:700;left:1363.80px;width:400px;text-align:center;">AU</span>
<div style="left:1545.8px;top:386.90000000000003px;width:36px;height:36px;background:#b763b7;border-radius:50%;"></div>
<span id="t85" style="top:396.49px;font-size:17.5px;color:#fff;font-weight:700;left:1363.80px;width:400px;text-align:center;">BS</span>
<svg style="left:1545.80px;top:441.74px" width="36.00" height="36.00" viewBox="-50 -50 100 100"><defs><clipPath id="c15"><circle r="50"/></clipPath><filter id="f15" x="-20%" y="-20%" width="140%" height="140%"><feGaussianBlur stdDeviation="1.9"/></filter></defs><g clip-path="url(#c15)"><g filter="url(#f15)"><rect x="-60" y="-60" width="120" height="120" fill="#e6ebf5"/><path d="M-52 10 L-30 4 L-4 52 L-52 52Z" fill="#1c2170"/><path d="M-10 54 Q0 26 40 24 L54 30 L54 54Z" fill="#e2a670"/><ellipse cx="-10" cy="-18" rx="28" ry="26" fill="#1e1e22" /><ellipse cx="16" cy="-6" rx="6" ry="18" fill="#1e1e22" /><ellipse cx="-8" cy="0" rx="21" ry="27" fill="#c99676"  transform="rotate(-12 -8 0)"/><path d="M-28 4 Q-10 48 16 6 Q12 22 -6 24 Q-22 24 -28 4Z" fill="#3a2a24"/><ellipse cx="-10" cy="16" rx="8" ry="4.2" fill="#f4efe8"  transform="rotate(-12 -10 16)"/><path d="M-28 -4 L10 -12" stroke="#6a5a58" stroke-width="2.2" fill="none"/></g></g></svg>
<svg style="left:1545.80px;top:496.58px" width="36.00" height="36.00" viewBox="-50 -50 100 100"><defs><clipPath id="c16"><circle r="50"/></clipPath><filter id="f16" x="-20%" y="-20%" width="140%" height="140%"><feGaussianBlur stdDeviation="1.9"/></filter></defs><g clip-path="url(#c16)"><g filter="url(#f16)"><rect x="-60" y="-60" width="120" height="120" fill="#8f908d"/><rect x="-52" y="-52" width="104" height="28" fill="#a3a8a6"/><path d="M10 -30 L54 -22 L54 30 L20 20Z" fill="#6a6b69"/><path d="M30 -14 L54 -10 L54 24 L36 18Z" fill="#2e2e30"/><path d="M-52 0 L-20 -6 L-16 54 L-52 54Z" fill="#77746e"/><ellipse cx="-6" cy="-4" rx="30" ry="40" fill="#5c3b2d" /><path d="M-34 0 Q-36 40 -6 54 L36 54 Q40 28 24 14Z" fill="#553629"/><ellipse cx="-14" cy="-26" rx="12" ry="9" fill="#7a5240" /><path d="M-18 54 Q-6 36 14 40 L20 54Z" fill="#15151c"/><ellipse cx="8" cy="4" rx="17.5" ry="22" fill="#dfa690"  transform="rotate(18 8 4)"/><ellipse cx="4" cy="-6" rx="10" ry="8" fill="#e9b8a4" /><path d="M-12 -14 Q4 -34 26 -12 Q6 -22 -12 -14Z" fill="#5c3b2d"/><ellipse cx="0" cy="-2" rx="3.4" ry="1.7" fill="#5a4038"  transform="rotate(18 0 -2)"/><ellipse cx="15" cy="3" rx="3.4" ry="1.7" fill="#5a4038"  transform="rotate(18 15 3)"/><ellipse cx="11" cy="15" rx="6.5" ry="3" fill="#e9a6a4"  transform="rotate(18 11 15)"/></g></g></svg>
<div style="left:1545.8px;top:551.4200000000001px;width:36px;height:36px;background:#b763b7;border-radius:50%;"></div>
<span id="t86" style="top:561.01px;font-size:17.5px;color:#fff;font-weight:700;left:1363.80px;width:400px;text-align:center;">CB</span>
<svg style="left:1545.80px;top:606.26px" width="36.00" height="36.00" viewBox="-50 -50 100 100"><defs><clipPath id="c17"><circle r="50"/></clipPath><filter id="f17" x="-20%" y="-20%" width="140%" height="140%"><feGaussianBlur stdDeviation="1.9"/></filter></defs><g clip-path="url(#c17)"><g filter="url(#f17)"><rect x="-60" y="-60" width="120" height="120" fill="#dddddc"/><rect x="-52" y="-52" width="40" height="104" fill="#e3e3e2"/><path d="M-34 -8 L-22 -14 L10 -12 L16 54 L-8 54 L-10 16Z" fill="#8c8c86"/><path d="M12 -6 L36 -8 L38 54 L16 54Z" fill="#cdd0d4"/><path d="M20 -4 V52 M28 -4 V52 M13 10 H38 M13 26 H38 M13 42 H38" stroke="#6a6f7c" stroke-width="2.2" fill="none"/><path d="M34 -6 L52 0 L52 40 L40 46Z" fill="#7e7e79"/><path d="M-22 -14 L10 -22 L14 -12 L-18 -4Z" fill="#b59b6c"/><ellipse cx="27" cy="-20" rx="12" ry="15.5" fill="#dbad95" /><path d="M14 -26 Q20 -44 38 -36 Q34 -28 22 -30Z" fill="#8a5a3a"/><path d="M20 -6 Q28 4 36 -8 Q28 -2 20 -6Z" fill="#b08a70"/><path d="M16 -20 L40 -18" stroke="#3a3a3e" stroke-width="2.4" fill="none"/></g></g></svg>
<svg style="left:1545.80px;top:661.10px" width="36.00" height="36.00" viewBox="-50 -50 100 100"><defs><clipPath id="c18"><circle r="50"/></clipPath><filter id="f18" x="-20%" y="-20%" width="140%" height="140%"><feGaussianBlur stdDeviation="1.9"/></filter></defs><g clip-path="url(#c18)"><g filter="url(#f18)"><rect x="-60" y="-60" width="120" height="120" fill="#dfd6d9"/><path d="M-26 -8 Q-24 -34 4 -32 Q32 -32 32 -4 L34 30 Q28 36 20 30 L-18 32 Q-28 36 -30 26Z" fill="#6b4a36"/><path d="M-34 54 L-30 38 Q-22 34 -16 36 L-14 54Z" fill="#2f4660"/><path d="M22 54 L22 36 Q30 34 36 40 L40 54Z" fill="#2f4660"/><path d="M-20 54 L-18 34 Q2 26 22 34 L24 54Z" fill="#ecc1ab"/><ellipse cx="2" cy="9" rx="19" ry="24" fill="#e9b5a0" /><ellipse cx="2" cy="0" rx="14" ry="9" fill="#f0c4b0" /><path d="M-18 2 Q-16 -22 8 -22 Q24 -20 22 2 Q16 -14 2 -14 Q-10 -12 -18 2Z" fill="#6b4a36"/><ellipse cx="-6" cy="4" rx="3.4" ry="1.6" fill="#4e3a34" /><ellipse cx="11" cy="4" rx="3.4" ry="1.6" fill="#4e3a34" /><path d="M-6 19 Q3 24 12 19 Q3 21 -6 19Z" fill="#c8807c"/></g></g></svg>
<svg style="left:1545.80px;top:715.94px" width="36.00" height="36.00" viewBox="-50 -50 100 100"><defs><clipPath id="c19"><circle r="50"/></clipPath><filter id="f19" x="-20%" y="-20%" width="140%" height="140%"><feGaussianBlur stdDeviation="1.9"/></filter></defs><g clip-path="url(#c19)"><g filter="url(#f19)"><rect x="-60" y="-60" width="120" height="120" fill="#f4f5f0"/><rect x="-52" y="10" width="30" height="44" fill="#e6ebe8"/><path d="M-38 54 Q-30 34 -12 30 L12 30 Q30 36 38 54Z" fill="#f3f3f1"/><path d="M-14 22 L-16 38 Q-2 44 12 36 L10 22Z" fill="#ead0c2"/><ellipse cx="-5" cy="-10" rx="28" ry="30" fill="#16161a" /><path d="M-32 -8 Q-34 16 -20 24 L-16 4Z" fill="#16161a"/><path d="M20 -10 Q28 4 18 14 L14 2Z" fill="#16161a"/><path d="M-16 -42 Q-2 -48 8 -38Z" fill="#16161a"/><ellipse cx="-5" cy="4" rx="17" ry="22" fill="#f1d6c9" /><ellipse cx="-8" cy="-2" rx="10" ry="8" fill="#f7e2d8" /><path d="M-22 -6 Q-14 -30 20 -16 Q24 -6 22 2 Q10 -16 -22 -6Z" fill="#16161a"/><ellipse cx="-12" cy="-1" rx="3.6" ry="1.6" fill="#6a5a5c" /><ellipse cx="4" cy="-1" rx="3.6" ry="1.6" fill="#6a5a5c" /><path d="M-10 14 Q-4 17 2 14 Q-4 16 -10 14Z" fill="#d48a92"/></g></g></svg>
<svg style="left:1545.80px;top:770.78px" width="36.00" height="36.00" viewBox="-50 -50 100 100"><defs><clipPath id="c20"><circle r="50"/></clipPath><filter id="f20" x="-20%" y="-20%" width="140%" height="140%"><feGaussianBlur stdDeviation="1.9"/></filter></defs><g clip-path="url(#c20)"><g filter="url(#f20)"><rect x="-60" y="-60" width="120" height="120" fill="#ffffff"/><ellipse cx="-38" cy="8" rx="16" ry="26" fill="#dcdcdc" /><path d="M-44 26 Q-30 22 -18 30 L10 40 Q26 40 30 44 L28 54 L-44 54Z" fill="#0e0e0e"/><ellipse cx="-8" cy="-24" rx="31" ry="24" fill="#121212" /><path d="M-36 -20 Q-40 10 -22 20 L-16 -6Z" fill="#121212"/><ellipse cx="9" cy="2" rx="22" ry="28" fill="#9c9c9c" /><ellipse cx="14" cy="-18" rx="14" ry="10" fill="#d9d9d9" /><ellipse cx="22" cy="4" rx="8" ry="12" fill="#c9c9c9" /><path d="M-20 0 Q-22 34 4 38 Q26 34 28 18 Q10 28 -2 12 Q-10 4 -20 0Z" fill="#2a2a2a"/><ellipse cx="17" cy="16" rx="8" ry="3.4" fill="#f4f4f4"  transform="rotate(-14 17 16)"/><path d="M-14 -12 L38 -14" stroke="#1c1c1c" stroke-width="3.2" fill="none"/><rect x="22" y="-16" width="16" height="9" fill="none" stroke="#3a3a3a" stroke-width="1.6"/></g></g></svg>
<div style="left:1545.8px;top:825.6200000000001px;width:36px;height:36px;background:#b763b7;border-radius:50%;"></div>
<span id="t87" style="top:835.21px;font-size:17.5px;color:#fff;font-weight:700;left:1363.80px;width:400px;text-align:center;">GN</span>
<svg style="left:1545.80px;top:880.46px" width="36.00" height="36.00" viewBox="-50 -50 100 100"><defs><clipPath id="c21"><circle r="50"/></clipPath><filter id="f21" x="-20%" y="-20%" width="140%" height="140%"><feGaussianBlur stdDeviation="1.9"/></filter></defs><g clip-path="url(#c21)"><g filter="url(#f21)"><rect x="-60" y="-60" width="120" height="120" fill="#b35fc0"/><circle r="44.5" fill="#e9dcc8"/><g clip-path="url(#curlyclip)"><path d="M-46 20 L-10 14 L-6 50 L-46 50Z" fill="#101012"/><ellipse cx="-4" cy="-4" rx="32" ry="36" fill="#4a4440" /><ellipse cx="-16" cy="16" rx="18" ry="24" fill="#5a5248" /><ellipse cx="16" cy="-26" rx="20" ry="14" fill="#4a4440" /><ellipse cx="-12" cy="-4" rx="6" ry="14" fill="#8a8270" /><ellipse cx="0" cy="18" rx="5" ry="12" fill="#8a8270" /><ellipse cx="-24" cy="6" rx="5" ry="10" fill="#7a725f" /><ellipse cx="24" cy="8" rx="17" ry="25" fill="#c08a70" /><ellipse cx="22" cy="0" rx="9" ry="9" fill="#d9a890" /><path d="M6 -22 Q26 -36 42 -10 Q26 -22 6 -6Z" fill="#4a4440"/><path d="M8 4 L42 8" stroke="#3a2f4a" stroke-width="2.6" fill="none"/><ellipse cx="28" cy="27" rx="7" ry="3.2" fill="#c0323a"  transform="rotate(10 28 27)"/><path d="M-6 38 L6 34 L10 54 L-8 54Z" fill="#c9d2d6"/></g><defs><clipPath id="curlyclip"><circle r="44.5"/></clipPath></defs></g></g></svg>
</div></body></html>
